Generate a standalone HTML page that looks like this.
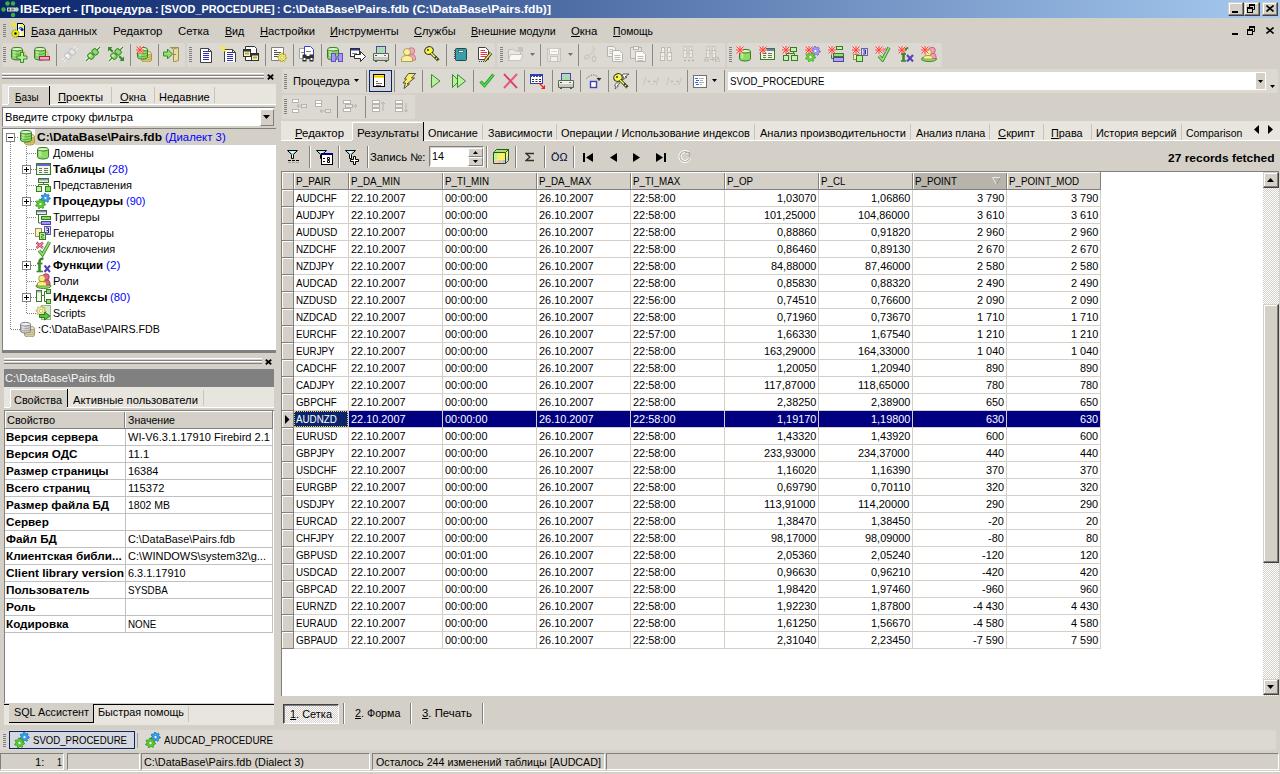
<!DOCTYPE html>
<html><head><meta charset="utf-8"><style>
html,body{margin:0;padding:0;}
body{width:1280px;height:774px;overflow:hidden;position:relative;background:#D4D0C8;font-family:"Liberation Sans",sans-serif;font-size:11px;}
body>div,body>span,body>svg{position:absolute;}
.t{white-space:pre;line-height:13px;transform-origin:0 0;display:block;}
u{text-decoration:underline;text-underline-offset:1px;}

</style></head><body>
<div style="left:0px;top:0px;width:1280px;height:18px;background:linear-gradient(to right,#0A246A,#A6CAF0)"></div>
<svg style="left:1px;top:1px" width="19" height="17" viewBox="0 0 19 17"><circle cx="6.5" cy="2.5" r="2.2" fill="#3CB040"/><circle cx="12" cy="2.5" r="2.2" fill="#3CB040"/><circle cx="2.5" cy="8.5" r="2.2" fill="#3CB040"/><circle cx="15.5" cy="8.5" r="2.2" fill="#B0D8A8"/><circle cx="12" cy="14" r="2.2" fill="#3CB040"/><rect x="6" y="6.5" width="8" height="4" fill="#D8D8D8"/><rect x="7" y="7.5" width="2" height="2" fill="#505050"/><rect x="10" y="7.5" width="3" height="2" fill="#808080"/></svg>
<span class="t" style="left:19.50px;top:3px;color:#fff;transform:scaleX(1.1104);font-weight:bold;">IBExpert - [Процедура</span>
<span class="t" style="left:155.00px;top:3px;color:#fff;transform:scaleX(0.9573);font-weight:bold;">:</span>
<span class="t" style="left:160.90px;top:3px;color:#fff;transform:scaleX(0.9878);font-weight:bold;">[SVOD_PROCEDURE]</span>
<span class="t" style="left:277.00px;top:3px;color:#fff;transform:scaleX(0.9573);font-weight:bold;">:</span>
<span class="t" style="left:282.80px;top:3px;color:#fff;transform:scaleX(1.0985);font-weight:bold;">C:\DataBase\Pairs.fdb (C:\DataBase\Pairs.fdb)]</span>
<div style="left:1228px;top:2px;width:16px;height:14px;background:#D4D0C8;border-top:1px solid #D4D0C8;border-left:1px solid #D4D0C8;border-right:1px solid #404040;border-bottom:1px solid #404040;box-sizing:border-box"></div>
<div style="left:1229px;top:3px;width:14px;height:1px;background:#fff"></div>
<div style="left:1229px;top:3px;width:1px;height:12px;background:#fff"></div>
<div style="left:1229px;top:14px;width:14px;height:1px;background:#808080"></div>
<div style="left:1242px;top:3px;width:1px;height:12px;background:#808080"></div>
<svg style="left:1232px;top:11px" width="6" height="2" viewBox="0 0 6 2"><rect width="6" height="2" fill="#000"/></svg>
<div style="left:1244px;top:2px;width:16px;height:14px;background:#D4D0C8;border-top:1px solid #D4D0C8;border-left:1px solid #D4D0C8;border-right:1px solid #404040;border-bottom:1px solid #404040;box-sizing:border-box"></div>
<div style="left:1245px;top:3px;width:14px;height:1px;background:#fff"></div>
<div style="left:1245px;top:3px;width:1px;height:12px;background:#fff"></div>
<div style="left:1245px;top:14px;width:14px;height:1px;background:#808080"></div>
<div style="left:1258px;top:3px;width:1px;height:12px;background:#808080"></div>
<svg style="left:1247px;top:4px" width="10" height="9" viewBox="0 0 10 9"><rect x="2" y="0" width="6" height="2" fill="#000"/><path d="M2.5 0.5V3M7.5 0.5V5.5H6" stroke="#000" fill="none"/><rect x="0" y="3" width="6" height="2" fill="#000"/><rect x="0.5" y="3.5" width="5" height="5" fill="none" stroke="#000"/></svg>
<div style="left:1262px;top:2px;width:16px;height:14px;background:#D4D0C8;border-top:1px solid #D4D0C8;border-left:1px solid #D4D0C8;border-right:1px solid #404040;border-bottom:1px solid #404040;box-sizing:border-box"></div>
<div style="left:1263px;top:3px;width:14px;height:1px;background:#fff"></div>
<div style="left:1263px;top:3px;width:1px;height:12px;background:#fff"></div>
<div style="left:1263px;top:14px;width:14px;height:1px;background:#808080"></div>
<div style="left:1276px;top:3px;width:1px;height:12px;background:#808080"></div>
<svg style="left:1266px;top:5px" width="8" height="7" viewBox="0 0 8 7"><path d="M0.5 0.5L7.5 6.5M7.5 0.5L0.5 6.5" stroke="#000" stroke-width="1.6"/></svg>
<svg style="left:3px;top:24px" width="3" height="13" viewBox="0 0 3 13"><rect x="0" y="0" width="3" height="1" fill="#808080"/><rect x="0" y="2" width="3" height="1" fill="#808080"/><rect x="0" y="4" width="3" height="1" fill="#808080"/><rect x="0" y="6" width="3" height="1" fill="#808080"/><rect x="0" y="8" width="3" height="1" fill="#808080"/><rect x="0" y="10" width="3" height="1" fill="#808080"/><rect x="0" y="12" width="3" height="1" fill="#808080"/></svg>
<svg style="left:10px;top:22px" width="16" height="16" viewBox="0 0 16 16"><path d="M7.5 1.5H12.5L14.5 3.5V14.5H7.5Z" fill="#fff" stroke="#000"/><path d="M10 1.5H12.5L14.5 3.5V14.5H12" fill="#F8F080"/><path d="M7.5 1.5H12.5L14.5 3.5V14.5H7.5Z" fill="none" stroke="#000"/><path d="M9 7Q10 4.5 12 6" stroke="#20A080" stroke-width="1.6" fill="none"/><circle cx="12" cy="7.5" r="1.6" fill="#1010E0"/><circle cx="5.5" cy="11.5" r="3.6" fill="#F0F000" stroke="#606000" stroke-width=".8" stroke-dasharray="1.2 .8"/><circle cx="5.5" cy="11.5" r="1.2" fill="#000"/><path d="M1 0.5L5 5M0 4H4M4 0.5V3.5M6 1L4 4" stroke="#F0F000" stroke-width="1.1"/></svg>
<span class="t" style="left:31.00px;top:25px;color:#000;transform:scaleX(1.0067);"><u>Б</u>аза данных</span>
<span class="t" style="left:112.50px;top:25px;color:#000;transform:scaleX(1.0445);">Редактор</span>
<span class="t" style="left:178.00px;top:25px;color:#000;transform:scaleX(1.0366);">Сетка</span>
<span class="t" style="left:224.60px;top:25px;color:#000;transform:scaleX(0.9695);"><u>В</u>ид</span>
<span class="t" style="left:259.50px;top:25px;color:#000;transform:scaleX(1.0197);"><u>Н</u>астройки</span>
<span class="t" style="left:329.60px;top:25px;color:#000;transform:scaleX(1.0015);"><u>И</u>нструменты</span>
<span class="t" style="left:413.80px;top:25px;color:#000;transform:scaleX(0.9983);"><u>С</u>лужбы</span>
<span class="t" style="left:470.70px;top:25px;color:#000;transform:scaleX(0.9682);"><u>В</u>нешние модули</span>
<span class="t" style="left:570.60px;top:25px;color:#000;transform:scaleX(1.0321);"><u>О</u>кна</span>
<span class="t" style="left:612.90px;top:25px;color:#000;transform:scaleX(0.9412);"><u>П</u>омощь</span>
<svg style="left:1232px;top:32px" width="6" height="3" viewBox="0 0 6 3"><rect width="6" height="2" y="1" fill="#000"/></svg>
<svg style="left:1247px;top:26px" width="10" height="9" viewBox="0 0 10 9"><rect x="2" y="0" width="6" height="2" fill="#000"/><path d="M2.5 0.5V3M7.5 0.5V5.5H6" stroke="#000" fill="none"/><rect x="0" y="3" width="6" height="2" fill="#000"/><rect x="0.5" y="3.5" width="5" height="5" fill="none" stroke="#000"/></svg>
<svg style="left:1266px;top:27px" width="8" height="7" viewBox="0 0 8 7"><path d="M0.5 0.5L7.5 6.5M7.5 0.5L0.5 6.5" stroke="#000" stroke-width="1.6"/></svg>
<div style="left:2px;top:43px;width:183px;height:24px;background:#DCD9D2;border-radius:2px"></div>
<svg style="left:3px;top:47px" width="3" height="15" viewBox="0 0 3 15"><rect x="0" y="0" width="3" height="1" fill="#808080"/><rect x="0" y="2" width="3" height="1" fill="#808080"/><rect x="0" y="4" width="3" height="1" fill="#808080"/><rect x="0" y="6" width="3" height="1" fill="#808080"/><rect x="0" y="8" width="3" height="1" fill="#808080"/><rect x="0" y="10" width="3" height="1" fill="#808080"/><rect x="0" y="12" width="3" height="1" fill="#808080"/><rect x="0" y="14" width="3" height="1" fill="#808080"/></svg>
<div style="left:187px;top:43px;width:308px;height:24px;background:#DCD9D2;border-radius:2px"></div>
<svg style="left:189px;top:47px" width="3" height="15" viewBox="0 0 3 15"><rect x="0" y="0" width="3" height="1" fill="#808080"/><rect x="0" y="2" width="3" height="1" fill="#808080"/><rect x="0" y="4" width="3" height="1" fill="#808080"/><rect x="0" y="6" width="3" height="1" fill="#808080"/><rect x="0" y="8" width="3" height="1" fill="#808080"/><rect x="0" y="10" width="3" height="1" fill="#808080"/><rect x="0" y="12" width="3" height="1" fill="#808080"/><rect x="0" y="14" width="3" height="1" fill="#808080"/></svg>
<div style="left:497px;top:43px;width:228px;height:24px;background:#DCD9D2;border-radius:2px"></div>
<svg style="left:500px;top:47px" width="3" height="15" viewBox="0 0 3 15"><rect x="0" y="0" width="3" height="1" fill="#808080"/><rect x="0" y="2" width="3" height="1" fill="#808080"/><rect x="0" y="4" width="3" height="1" fill="#808080"/><rect x="0" y="6" width="3" height="1" fill="#808080"/><rect x="0" y="8" width="3" height="1" fill="#808080"/><rect x="0" y="10" width="3" height="1" fill="#808080"/><rect x="0" y="12" width="3" height="1" fill="#808080"/><rect x="0" y="14" width="3" height="1" fill="#808080"/></svg>
<div style="left:727px;top:43px;width:215px;height:24px;background:#DCD9D2;border-radius:2px"></div>
<svg style="left:729px;top:47px" width="3" height="15" viewBox="0 0 3 15"><rect x="0" y="0" width="3" height="1" fill="#808080"/><rect x="0" y="2" width="3" height="1" fill="#808080"/><rect x="0" y="4" width="3" height="1" fill="#808080"/><rect x="0" y="6" width="3" height="1" fill="#808080"/><rect x="0" y="8" width="3" height="1" fill="#808080"/><rect x="0" y="10" width="3" height="1" fill="#808080"/><rect x="0" y="12" width="3" height="1" fill="#808080"/><rect x="0" y="14" width="3" height="1" fill="#808080"/></svg>
<div style="left:56px;top:44px;width:1px;height:22px;background:#8C8984"></div>
<div style="left:130px;top:44px;width:1px;height:22px;background:#8C8984"></div>
<div style="left:158px;top:44px;width:1px;height:22px;background:#8C8984"></div>
<div style="left:265px;top:44px;width:1px;height:22px;background:#8C8984"></div>
<div style="left:293px;top:44px;width:1px;height:22px;background:#8C8984"></div>
<div style="left:321px;top:44px;width:1px;height:22px;background:#8C8984"></div>
<div style="left:395px;top:44px;width:1px;height:22px;background:#8C8984"></div>
<div style="left:446px;top:44px;width:1px;height:22px;background:#8C8984"></div>
<div style="left:540px;top:44px;width:1px;height:22px;background:#8C8984"></div>
<div style="left:578px;top:44px;width:1px;height:22px;background:#8C8984"></div>
<div style="left:652px;top:44px;width:1px;height:22px;background:#8C8984"></div>
<svg style="left:10px;top:46px" width="18" height="17" viewBox="0 0 18 17"><path d="M9 5A5 2.2 0 0 1 15 7V12" stroke="#D8C070" fill="none" stroke-width="1.6"/><g transform="translate(1,1)"><path d="M0.5 2.2 V10.8 A5.5 2.2 0 0 0 11.5 10.8 V2.2" fill="#8CDC64" stroke="#3A7A28"/><path d="M0.5 5.1 A5.5 2.2 0 0 0 11.5 5.1" fill="none" stroke="#3A7A28" stroke-width=".7" opacity=".8"/><path d="M0.5 7.9 A5.5 2.2 0 0 0 11.5 7.9" fill="none" stroke="#3A7A28" stroke-width=".7" opacity=".8"/><ellipse cx="6.0" cy="2.2" rx="5.5" ry="1.8000000000000003" fill="#D8F8C0" stroke="#3A7A28"/><rect x="2" y="3.7" width="2.5" height="6.6" fill="#fff" opacity=".35"/></g><path d="M10.5 6.5H13.5V10H17V13H13.5V16.5H10.5V13H7V10H10.5Z" fill="#B8F098" stroke="#3A8A28"/></svg>
<svg style="left:33px;top:46px" width="18" height="17" viewBox="0 0 18 17"><path d="M9 5A5 2.2 0 0 1 15 7V12" stroke="#D8C070" fill="none" stroke-width="1.6"/><g transform="translate(1,1)"><path d="M0.5 2.2 V10.8 A5.5 2.2 0 0 0 11.5 10.8 V2.2" fill="#8CDC64" stroke="#3A7A28"/><path d="M0.5 5.1 A5.5 2.2 0 0 0 11.5 5.1" fill="none" stroke="#3A7A28" stroke-width=".7" opacity=".8"/><path d="M0.5 7.9 A5.5 2.2 0 0 0 11.5 7.9" fill="none" stroke="#3A7A28" stroke-width=".7" opacity=".8"/><ellipse cx="6.0" cy="2.2" rx="5.5" ry="1.8000000000000003" fill="#D8F8C0" stroke="#3A7A28"/><rect x="2" y="3.7" width="2.5" height="6.6" fill="#fff" opacity=".35"/></g><rect x="6.5" y="10.5" width="10" height="3.5" fill="#F8A8C0" stroke="#A02850"/></svg>
<svg style="left:62px;top:46px" width="16" height="16" viewBox="0 0 16 16"><path d="M1 15L15 1" stroke="#fff" stroke-width="3"/><path d="M1 15L15 1" stroke="#C0C0C0" stroke-width="1.2"/><g transform="rotate(-45 8 8)"><rect x="2.5" y="5" width="5" height="6" rx="1.5" fill="#E8E8E8" stroke="#C0C0C0"/><rect x="8.5" y="5" width="5" height="6" rx="1.5" fill="#E8E8E8" stroke="#C0C0C0"/><rect x="3.5" y="6" width="2.5" height="2" fill="#fff"/></g></svg>
<svg style="left:85px;top:46px" width="16" height="16" viewBox="0 0 16 16"><path d="M1 15L15 1" stroke="#fff" stroke-width="3"/><path d="M1 15L15 1" stroke="#3A8A28" stroke-width="1.2"/><g transform="rotate(-45 8 8)"><rect x="2.5" y="5" width="5" height="6" rx="1.5" fill="#90D870" stroke="#3A8A28"/><rect x="8.5" y="5" width="5" height="6" rx="1.5" fill="#90D870" stroke="#3A8A28"/><rect x="3.5" y="6" width="2.5" height="2" fill="#D0F4B8"/></g></svg>
<svg style="left:108px;top:46px" width="16" height="16" viewBox="0 0 16 16"><path d="M1 15L15 1" stroke="#fff" stroke-width="3"/><path d="M1 15L15 1" stroke="#3A8A28" stroke-width="1.2"/><g transform="rotate(-45 8 8)"><rect x="2.5" y="5" width="5" height="6" rx="1.5" fill="#90D870" stroke="#3A8A28"/><rect x="8.5" y="5" width="5" height="6" rx="1.5" fill="#90D870" stroke="#3A8A28"/><rect x="3.5" y="6" width="2.5" height="2" fill="#D0F4B8"/></g><path d="M0 1H4.5L3 2.5L5.5 5L4 6.5L1.5 4L0 5.5Z" fill="#3A8A28"/><path d="M16 15H11.5L13 13.5L10.5 11L12 9.5L14.5 12L16 10.5Z" fill="#3A8A28"/></svg>
<svg style="left:136px;top:46px" width="16" height="16" viewBox="0 0 16 16"><g transform="translate(5,5)"><path d="M0.5 2.2 V8.8 A5.0 2.2 0 0 0 10.5 8.8 V2.2" fill="#D8C868" stroke="#A89848"/><path d="M0.5 4.4 A5.0 2.2 0 0 0 10.5 4.4" fill="none" stroke="#A89848" stroke-width=".7" opacity=".8"/><path d="M0.5 6.6 A5.0 2.2 0 0 0 10.5 6.6" fill="none" stroke="#A89848" stroke-width=".7" opacity=".8"/><ellipse cx="5.5" cy="2.2" rx="5.0" ry="1.8000000000000003" fill="#F4ECA8" stroke="#A89848"/><rect x="2" y="3.7" width="2.5" height="4.6" fill="#fff" opacity=".35"/></g><g transform="translate(1,1)"><path d="M0.5 2.2 V9.8 A5.0 2.2 0 0 0 10.5 9.8 V2.2" fill="#8CDC64" stroke="#3A7A28"/><path d="M0.5 4.7 A5.0 2.2 0 0 0 10.5 4.7" fill="none" stroke="#3A7A28" stroke-width=".7" opacity=".8"/><path d="M0.5 7.3 A5.0 2.2 0 0 0 10.5 7.3" fill="none" stroke="#3A7A28" stroke-width=".7" opacity=".8"/><ellipse cx="5.5" cy="2.2" rx="5.0" ry="1.8000000000000003" fill="#D8F8C0" stroke="#3A7A28"/><rect x="2" y="3.7" width="2.5" height="5.6" fill="#fff" opacity=".35"/></g><g transform="translate(0,0)"><circle cx="4" cy="4" r="3" fill="#FFE45A"/><path d="M0.5 0.5L7.5 7.5M7.5 0.5L0.5 7.5M4 0V8M0 4H8" stroke="#FF3C78" stroke-width="1"/><rect x="3" y="3" width="2" height="2" fill="#FF3C78"/></g></svg>
<svg style="left:163px;top:46px" width="16" height="16" viewBox="0 0 16 16"><path d="M7.5 1.5H15.5V14.5L10.5 16V3Z" fill="#E8DCA0" stroke="#A09050"/><path d="M10.5 3L15.5 1.5" stroke="#A09050"/><rect x="11.5" y="8" width="1" height="1" fill="#604010"/><path d="M0.5 6H4.5V3L9.5 8L4.5 13V10H0.5Z" fill="#90E070" stroke="#3A8A28"/></svg>
<svg style="left:200px;top:48px" width="16" height="16" viewBox="0 0 16 16"><path d="M0.5 0.5H8.5L11.5 3.5V14.5H0.5Z" fill="#fff" stroke="#404040"/><path d="M8.5 0.5V3.5H11.5" fill="none" stroke="#404040"/><rect x="3" y="3" width="6" height="1" fill="#3030B0"/><rect x="3" y="5" width="6" height="1" fill="#3030B0"/><rect x="3" y="7" width="6" height="1" fill="#3030B0"/><rect x="3" y="9" width="6" height="1" fill="#3030B0"/><rect x="3" y="11" width="6" height="1" fill="#3030B0"/></svg>
<svg style="left:220px;top:46px" width="16" height="16" viewBox="0 0 16 16"><path d="M4.5 3.5H12.5L15.5 6.5V16.5H4.5Z" fill="#fff" stroke="#404040"/><path d="M12.5 3.5V6.5H15.5" fill="none" stroke="#404040"/><rect x="7" y="6" width="6" height="1" fill="#3030B0"/><rect x="7" y="8" width="6" height="1" fill="#3030B0"/><rect x="7" y="10" width="6" height="1" fill="#3030B0"/><rect x="7" y="12" width="6" height="1" fill="#3030B0"/><rect x="7" y="14" width="6" height="1" fill="#3030B0"/><path d="M0.5 0.5L6 6M3 0V3M0 3H3M6 1L4 3" stroke="#F8F030" stroke-width="1.1"/></svg>
<svg style="left:243px;top:46px" width="16" height="16" viewBox="0 0 16 16"><path d="M2.5 0.5H11.5L13.5 2.5V14.5H2.5Z" fill="#fff" stroke="#303030"/><rect x="0.5" y="3.5" width="7" height="7" fill="#FFF8A0" stroke="#303030"/><rect x="1" y="4" width="6" height="1.5" fill="#303030"/><rect x="2" y="6.5" width="4" height="2" fill="#A0A0A0"/><rect x="8.5" y="7.5" width="7" height="7" fill="#FFF8A0" stroke="#303030"/><rect x="9" y="8" width="6" height="1.5" fill="#303030"/><rect x="10" y="10.5" width="4" height="2" fill="#A0A0A0"/></svg>
<svg style="left:271px;top:46px" width="16" height="16" viewBox="0 0 16 16"><path d="M0.5 1.5H12.5V14.5H0.5Z" fill="#fff" stroke="#808080"/><path d="M3 4.5H6M3 6.5H10M3 8.5H10M3 10.5H8" stroke="#505050"/><polygon points="15.60,11.50 15.51,12.40 13.97,12.73 13.68,13.29 14.25,14.75 13.56,15.32 12.23,14.47 11.63,14.66 11.00,16.10 10.10,16.01 9.77,14.47 9.21,14.18 7.75,14.75 7.18,14.06 8.03,12.73 7.84,12.13 6.40,11.50 6.49,10.60 8.03,10.27 8.32,9.71 7.75,8.25 8.44,7.68 9.77,8.53 10.37,8.34 11.00,6.90 11.90,6.99 12.23,8.53 12.79,8.82 14.25,8.25 14.82,8.94 13.97,10.27 14.16,10.87" fill="#F8F060" stroke="#A09020" stroke-width=".7"/><circle cx="11" cy="11.5" r="1.47" fill="#fff" stroke="#A09020" stroke-width=".5"/></svg>
<svg style="left:299px;top:46px" width="16" height="16" viewBox="0 0 16 16"><path d="M0.5 2.5H6.5L8.5 4.5V12.5H0.5Z" fill="#fff" stroke="#A0A0A0"/><path d="M5.5 0.5H11.5L14.5 3.5V12.5H5.5Z" fill="#fff" stroke="#4040C0"/><path d="M2 6.5H5M7 5.5H12" stroke="#808080"/><rect x="3.5" y="8.5" width="4" height="7" fill="#303030"/><rect x="10.5" y="8.5" width="4" height="7" fill="#303030"/><rect x="7" y="10" width="4" height="3" fill="#303030"/><rect x="4.5" y="12" width="2" height="2" fill="#fff"/><rect x="11.5" y="12" width="2" height="2" fill="#fff"/></svg>
<svg style="left:326px;top:46px" width="18" height="17" viewBox="0 0 18 17"><g transform="translate(1,1)"><path d="M0.5 2.2 V10.8 A5.5 2.2 0 0 0 11.5 10.8 V2.2" fill="#8CDC64" stroke="#3A7A28"/><path d="M0.5 5.1 A5.5 2.2 0 0 0 11.5 5.1" fill="none" stroke="#3A7A28" stroke-width=".7" opacity=".8"/><path d="M0.5 7.9 A5.5 2.2 0 0 0 11.5 7.9" fill="none" stroke="#3A7A28" stroke-width=".7" opacity=".8"/><ellipse cx="6.0" cy="2.2" rx="5.5" ry="1.8000000000000003" fill="#D8F8C0" stroke="#3A7A28"/><rect x="2" y="3.7" width="2.5" height="6.6" fill="#fff" opacity=".35"/></g><rect x="5.5" y="7.5" width="4" height="8" fill="#A898F0" stroke="#6050C0"/><rect x="12.5" y="7.5" width="4" height="8" fill="#A898F0" stroke="#6050C0"/><rect x="9" y="10" width="4" height="3" fill="#8070D8"/></svg>
<svg style="left:350px;top:46px" width="16" height="16" viewBox="0 0 16 16"><rect x="0.5" y="2.5" width="9" height="8" fill="#fff" stroke="#303030"/><rect x="1" y="3" width="8" height="1.5" fill="#3030A0"/><path d="M2 7.5H7" stroke="#808080"/><path d="M4.5 8.5H10.5V5.5L15.5 10.5L10.5 15.5V12.5H4.5Z" fill="#fff" stroke="#303030"/></svg>
<svg style="left:373px;top:46px" width="16" height="16" viewBox="0 0 16 16"><rect x="3.5" y="0.5" width="9" height="8" fill="#B8E8B0" stroke="#5040A8"/><rect x="4.5" y="1.5" width="7" height="6" fill="#A8D8B8"/><path d="M0.5 7.5H15.5V14.5H0.5Z" fill="#F0F0F0" stroke="#507040"/><rect x="1" y="11" width="14" height="3" fill="#C8C8C8"/><rect x="2" y="9" width="2" height="1" fill="#404040"/><rect x="11" y="9" width="2" height="1" fill="#F03060"/><rect x="2" y="15" width="2" height="1" fill="#505050"/><rect x="12" y="15" width="2" height="1" fill="#505050"/></svg>
<svg style="left:401px;top:46px" width="16" height="16" viewBox="0 0 16 16"><circle cx="10.5" cy="5" r="3.3" fill="#F0A8B8" stroke="#C07080" stroke-width=".8"/><path d="M7 15V11.5Q7 8.5 10.5 8.5Q14.5 8.5 14.5 11.5V14Z" fill="#F0A8B8" stroke="#C07080" stroke-width=".8"/><circle cx="6" cy="6" r="3.5" fill="#F8F0A0" stroke="#A09040" stroke-width=".8"/><path d="M0.5 15.5V13Q1 9.5 6 9.5Q11 9.5 11.5 13V15.5Z" fill="#F8F0A0" stroke="#A09040" stroke-width=".8"/></svg>
<svg style="left:424px;top:46px" width="16" height="16" viewBox="0 0 16 16"><ellipse cx="5" cy="4.5" rx="4.3" ry="3.8" fill="#F8F840" stroke="#303030" transform="rotate(-20 5 4.5)"/><circle cx="4" cy="4" r="1" fill="#303030"/><path d="M7 7L14.5 14.5" stroke="#303030" stroke-width="3"/><path d="M7 7L14.5 14.5" stroke="#F8F840" stroke-width="1.4"/><path d="M11 12L12.5 10.5M13 14L14.5 12.5" stroke="#303030" stroke-width="1.6"/></svg>
<svg style="left:453px;top:46px" width="16" height="16" viewBox="0 0 16 16"><rect x="2.5" y="2.5" width="11" height="12" rx="1" fill="#38A0A8" stroke="#204848"/><rect x="5.5" y="4.5" width="5" height="2" fill="#fff" stroke="#204848" stroke-width=".6"/><path d="M1 4.5H3M1 6.5H3M1 8.5H3M1 10.5H3M1 12.5H3" stroke="#505050"/></svg>
<svg style="left:477px;top:46px" width="16" height="16" viewBox="0 0 16 16"><path d="M1.5 1.5H8.5L11.5 4.5V13.5H1.5Z" fill="#fff" stroke="#404040"/><path d="M3.5 4.5H8M3.5 6.5H10M3.5 8.5H10M3.5 10.5H9" stroke="#F03040"/><path d="M7.5 15L14 7" stroke="#303030" stroke-width="3"/><path d="M7.8 14.6L13.8 7.2" stroke="#F8F040" stroke-width="1.4"/><path d="M2 15.5H3M4 15.5H5M6 15.5H7" stroke="#404040"/></svg>
<svg style="left:508px;top:46px" width="16" height="16" viewBox="0 0 16 16"><path d="M0.5 3.5H5.5L7 5H12.5V14.5H0.5Z" fill="#E8E6E0" stroke="#C0BCB4"/><path d="M2.5 8.5H15L12.5 14.5H0.5Z" fill="#F8F8F6" stroke="#C8C4BC"/><rect x="10" y="1" width="5" height="5" fill="#C8C4BC"/></svg>
<svg style="left:530px;top:53px" width="5" height="3" viewBox="0 0 5 3"><path d="M0 0H5L2.5 3Z" fill="#707070"/></svg>
<svg style="left:547px;top:48px" width="16" height="16" viewBox="0 0 16 16"><rect x="0.5" y="0.5" width="13" height="13" fill="#E0DED8" stroke="#C8C4BC"/><rect x="2.5" y="0.5" width="9" height="6" fill="#FAFAFA" stroke="#D0CCC4"/><path d="M4 3.5H10" stroke="#D8D4CC"/><rect x="3.5" y="8.5" width="7" height="5" fill="#F0F0EE" stroke="#C8C4BC"/></svg>
<svg style="left:568px;top:53px" width="5" height="3" viewBox="0 0 5 3"><path d="M0 0H5L2.5 3Z" fill="#707070"/></svg>
<svg style="left:584px;top:46px" width="16" height="16" viewBox="0 0 16 16"><ellipse cx="3" cy="11" rx="2.6" ry="1.8" fill="none" stroke="#C8C4BC" stroke-width="1.2" transform="rotate(-30 3 11)"/><ellipse cx="10" cy="13" rx="1.8" ry="2.6" fill="none" stroke="#C8C4BC" stroke-width="1.2"/><path d="M5 10L12 2M10 10.5L9 0" stroke="#D0CCC4" stroke-width="1.3"/></svg>
<svg style="left:607px;top:46px" width="16" height="16" viewBox="0 0 16 16"><path d="M0.5 0.5H6.5L8.5 2.5V10.5H0.5Z" fill="#F4F2EE" stroke="#B8B4AC"/><path d="M2 3.5H6M2 5.5H7M2 7.5H7" stroke="#C8C4BC"/><path d="M5.5 4.5H12.5L15.5 7.5V15.5H5.5Z" fill="#FAFAFA" stroke="#B8B4AC"/><path d="M7.5 9.5H13.5M7.5 11.5H13.5M7.5 13.5H13.5" stroke="#C0BCB4"/></svg>
<svg style="left:630px;top:46px" width="16" height="16" viewBox="0 0 16 16"><rect x="0.5" y="1.5" width="11" height="11" fill="#E4E2DC" stroke="#B8B4AC"/><rect x="3.5" y="0.5" width="5" height="3" fill="#F4F2EE" stroke="#B8B4AC"/><path d="M5.5 5.5H12.5L15.5 8.5V15.5H5.5Z" fill="#FAFAFA" stroke="#B8B4AC"/><path d="M7.5 10.5H13.5M7.5 12.5H13.5M7.5 14.5H13.5" stroke="#C0BCB4"/></svg>
<svg style="left:659px;top:46px" width="16" height="16" viewBox="0 0 16 16"><rect x="1.5" y="6.5" width="4" height="8" fill="#F0EEE8" stroke="#C0BCB4"/><rect x="8.5" y="6.5" width="4" height="8" fill="#F0EEE8" stroke="#C0BCB4"/><rect x="2.5" y="1.5" width="3" height="5" fill="#F0EEE8" stroke="#C0BCB4"/><rect x="8.5" y="1.5" width="3" height="5" fill="#F0EEE8" stroke="#C0BCB4"/><rect x="5" y="8" width="4" height="3" fill="#D0CCC4"/><path d="M2.5 10.5H4.5M9.5 10.5H11.5" stroke="#C8C4BC"/></svg>
<svg style="left:681px;top:46px" width="16" height="16" viewBox="0 0 16 16"><g transform="translate(1,-1) scale(.85)"><rect x="1.5" y="6.5" width="4" height="8" fill="#F0EEE8" stroke="#C0BCB4"/><rect x="8.5" y="6.5" width="4" height="8" fill="#F0EEE8" stroke="#C0BCB4"/><rect x="2.5" y="1.5" width="3" height="5" fill="#F0EEE8" stroke="#C0BCB4"/><rect x="8.5" y="1.5" width="3" height="5" fill="#F0EEE8" stroke="#C0BCB4"/><rect x="5" y="8" width="4" height="3" fill="#D0CCC4"/><path d="M2.5 10.5H4.5M9.5 10.5H11.5" stroke="#C8C4BC"/></g><path d="M3 14.5H5M7 14.5H9M11 14.5H13" stroke="#B8B4AC" stroke-width="1.4"/></svg>
<svg style="left:704px;top:46px" width="16" height="16" viewBox="0 0 16 16"><g transform="translate(1,-1) scale(.85)"><rect x="1.5" y="6.5" width="4" height="8" fill="#F0EEE8" stroke="#C0BCB4"/><rect x="8.5" y="6.5" width="4" height="8" fill="#F0EEE8" stroke="#C0BCB4"/><rect x="2.5" y="1.5" width="3" height="5" fill="#F0EEE8" stroke="#C0BCB4"/><rect x="8.5" y="1.5" width="3" height="5" fill="#F0EEE8" stroke="#C0BCB4"/><rect x="5" y="8" width="4" height="3" fill="#D0CCC4"/><path d="M2.5 10.5H4.5M9.5 10.5H11.5" stroke="#C8C4BC"/></g><path d="M1 16V12.5L2.5 11L4 12.5V16M1 14H4M6 13.5H10M8.5 12L10 13.5L8.5 15M11.5 11H14L15 12L14 13H11.5M11.5 16H14.5L15.5 15V14L14.5 13M11.5 11V16" stroke="#C0BCB4" fill="none"/></svg>
<svg style="left:736px;top:46px" width="16" height="16" viewBox="0 0 16 16"><g transform="translate(3,3)"><path d="M0.5 2.2 V9.8 A5.5 2.2 0 0 0 11.5 9.8 V2.2" fill="#8CDC64" stroke="#3A7A28"/><ellipse cx="6.0" cy="2.2" rx="5.5" ry="1.8000000000000003" fill="#D8F8C0" stroke="#3A7A28"/><rect x="2" y="3.7" width="2.5" height="5.6" fill="#fff" opacity=".35"/></g><g transform="translate(0,0)"><circle cx="4" cy="4" r="3" fill="#FFE45A"/><path d="M0.5 0.5L7.5 7.5M7.5 0.5L0.5 7.5M4 0V8M0 4H8" stroke="#FF3C78" stroke-width="1"/><rect x="3" y="3" width="2" height="2" fill="#FF3C78"/></g></svg>
<svg style="left:759px;top:46px" width="16" height="16" viewBox="0 0 16 16"><rect x="1.5" y="2.5" width="14" height="11" fill="#E8F8D8" stroke="#3A7A28"/><rect x="8" y="3" width="7" height="2" fill="#8070D0"/><path d="M4 7.5H7M9 7.5H13M4 9.5H7M9 9.5H13M4 11.5H7M9 11.5H13" stroke="#707070"/><g transform="translate(0,0)"><circle cx="4" cy="4" r="3" fill="#FFE45A"/><path d="M0.5 0.5L7.5 7.5M7.5 0.5L0.5 7.5M4 0V8M0 4H8" stroke="#FF3C78" stroke-width="1"/><rect x="3" y="3" width="2" height="2" fill="#FF3C78"/></g></svg>
<svg style="left:782px;top:46px" width="16" height="16" viewBox="0 0 16 16"><rect x="8.5" y="1.5" width="6" height="4" fill="#C8F0A8" stroke="#3A7A28"/><path d="M11.5 5.5V7.5H4.5V9.5M11.5 7.5H12.5V9.5" stroke="#3A7A28" fill="none"/><rect x="1.5" y="9.5" width="5" height="5" fill="#C8F0A8" stroke="#3A7A28"/><rect x="9.5" y="9.5" width="6" height="5" fill="#C8F0A8" stroke="#3A7A28"/><g transform="translate(0,0)"><circle cx="4" cy="4" r="3" fill="#FFE45A"/><path d="M0.5 0.5L7.5 7.5M7.5 0.5L0.5 7.5M4 0V8M0 4H8" stroke="#FF3C78" stroke-width="1"/><rect x="3" y="3" width="2" height="2" fill="#FF3C78"/></g></svg>
<svg style="left:805px;top:46px" width="16" height="16" viewBox="0 0 16 16"><g transform="translate(0,0)"><polygon points="15.30,5.00 15.18,6.07 13.53,6.46 13.13,7.09 13.49,8.75 12.58,9.32 11.25,8.28 10.50,8.36 9.43,9.68 8.42,9.32 8.41,7.63 7.87,7.09 6.18,7.08 5.82,6.07 7.14,5.00 7.22,4.25 6.18,2.92 6.75,2.01 8.41,2.37 9.04,1.97 9.43,0.32 10.50,0.20 11.25,1.72 11.96,1.97 13.49,1.25 14.25,2.01 13.53,3.54 13.78,4.25" fill="#A8A0F8" stroke="#6050C0" stroke-width=".7"/><circle cx="10.5" cy="5" r="1.54" fill="#fff" stroke="#6050C0" stroke-width=".5"/><polygon points="10.50,11.00 10.37,12.11 8.65,12.52 8.24,13.18 8.62,14.91 7.67,15.50 6.28,14.41 5.50,14.50 4.39,15.87 3.33,15.50 3.32,13.74 2.76,13.18 1.00,13.17 0.63,12.11 2.00,11.00 2.09,10.22 1.00,8.83 1.59,7.88 3.32,8.26 3.98,7.85 4.39,6.13 5.50,6.00 6.28,7.59 7.02,7.85 8.62,7.09 9.41,7.88 8.65,9.48 8.91,10.22" fill="#68D838" stroke="#3A9A28" stroke-width=".7"/><circle cx="5.5" cy="11" r="1.60" fill="#fff" stroke="#3A9A28" stroke-width=".5"/></g><g transform="translate(0,0)"><circle cx="4" cy="4" r="3" fill="#FFE45A"/><path d="M0.5 0.5L7.5 7.5M7.5 0.5L0.5 7.5M4 0V8M0 4H8" stroke="#FF3C78" stroke-width="1"/><rect x="3" y="3" width="2" height="2" fill="#FF3C78"/></g></svg>
<svg style="left:828px;top:46px" width="16" height="16" viewBox="0 0 16 16"><rect x="8.5" y="0.5" width="6" height="3" fill="#C8F0A8" stroke="#3A7A28"/><path d="M3.5 8.5V12.5H6" stroke="#3A7A28" fill="none"/><rect x="5.5" y="7.5" width="10" height="3" fill="#90E070" stroke="#3A7A28"/><rect x="5.5" y="11.5" width="10" height="4" fill="#B0A8F0" stroke="#5040A0"/><g transform="translate(0,0)"><circle cx="4" cy="4" r="3" fill="#FFE45A"/><path d="M0.5 0.5L7.5 7.5M7.5 0.5L0.5 7.5M4 0V8M0 4H8" stroke="#FF3C78" stroke-width="1"/><rect x="3" y="3" width="2" height="2" fill="#FF3C78"/></g></svg>
<svg style="left:852px;top:46px" width="16" height="16" viewBox="0 0 16 16"><rect x="9.5" y="2.5" width="6" height="7" fill="#E0DCFF" stroke="#7060B0"/><path d="M11 4H13.5V6H11.5M13.5 6V8H11" stroke="#303080" fill="none"/><rect x="1.5" y="8.5" width="5" height="5" fill="#F8F0C0" stroke="#A09050"/><rect x="4.5" y="9.5" width="6" height="6" fill="#B8F098" stroke="#3A7A28"/><g transform="translate(0,0)"><circle cx="4" cy="4" r="3" fill="#FFE45A"/><path d="M0.5 0.5L7.5 7.5M7.5 0.5L0.5 7.5M4 0V8M0 4H8" stroke="#FF3C78" stroke-width="1"/><rect x="3" y="3" width="2" height="2" fill="#FF3C78"/></g></svg>
<svg style="left:875px;top:46px" width="16" height="16" viewBox="0 0 16 16"><path d="M4 10L7.5 14L14 1.5" stroke="#3A8A28" stroke-width="3.4" fill="none"/><path d="M4 10L7.5 14L14 1.5" stroke="#98E878" stroke-width="1.6" fill="none"/><path d="M8 2L11 6M11 2L8 6" stroke="#F080A0" stroke-width="1.3"/><g transform="translate(0,0)"><circle cx="4" cy="4" r="3" fill="#FFE45A"/><path d="M0.5 0.5L7.5 7.5M7.5 0.5L0.5 7.5M4 0V8M0 4H8" stroke="#FF3C78" stroke-width="1"/><rect x="3" y="3" width="2" height="2" fill="#FF3C78"/></g></svg>
<svg style="left:898px;top:46px" width="16" height="16" viewBox="0 0 16 16"><path d="M5.5 15V7Q5.5 3 9 3" stroke="#3A8A28" stroke-width="2.6" fill="none"/><path d="M3 8H8" stroke="#3A8A28" stroke-width="1.8"/><path d="M3 15H8" stroke="#3A8A28" stroke-width="1.6"/><path d="M9 9L15 15.5M15 9L9 15.5" stroke="#5040C0" stroke-width="2"/><circle cx="9.5" cy="2" r="1" fill="#3A8A28"/><g transform="translate(0,0)"><circle cx="4" cy="4" r="3" fill="#FFE45A"/><path d="M0.5 0.5L7.5 7.5M7.5 0.5L0.5 7.5M4 0V8M0 4H8" stroke="#FF3C78" stroke-width="1"/><rect x="3" y="3" width="2" height="2" fill="#FF3C78"/></g></svg>
<svg style="left:921px;top:46px" width="16" height="16" viewBox="0 0 16 16"><ellipse cx="8" cy="13" rx="7.5" ry="2.5" fill="#90D870" stroke="#3A8A28"/><circle cx="11" cy="4.5" r="3.3" fill="#F4A0B8" stroke="#C05070" stroke-width=".8"/><path d="M8 12.5V10Q8 7.5 11.5 7.5Q15 7.5 15 10V12.5Z" fill="#F4A0B8" stroke="#C05070" stroke-width=".8"/><circle cx="7" cy="6.5" r="3.3" fill="#F8F0A0" stroke="#A09040" stroke-width=".8"/><path d="M2.5 13V11Q2.5 9.5 7 9.5Q11.5 9.5 11.5 11V13Z" fill="#F8F0A0" stroke="#A09040" stroke-width=".8"/><g transform="translate(0,0)"><circle cx="4" cy="4" r="3" fill="#FFE45A"/><path d="M0.5 0.5L7.5 7.5M7.5 0.5L0.5 7.5M4 0V8M0 4H8" stroke="#FF3C78" stroke-width="1"/><rect x="3" y="3" width="2" height="2" fill="#FF3C78"/></g></svg>
<div style="left:2px;top:73px;width:262px;height:1px;background:#fff"></div>
<div style="left:2px;top:75px;width:262px;height:1px;background:#808080"></div>
<div style="left:2px;top:76px;width:262px;height:1px;background:#fff"></div>
<div style="left:2px;top:78px;width:262px;height:1px;background:#808080"></div>
<svg style="left:267px;top:74px" width="7" height="6" viewBox="0 0 7 6"><path d="M0.8 0.8L6.2 5.2M6.2 0.8L0.8 5.2" stroke="#000" stroke-width="1.8"/></svg>
<div style="left:2px;top:84px;width:274px;height:21px;background:#E8E5DE"></div>
<div style="left:2px;top:104px;width:274px;height:1px;background:#fff"></div>
<div style="left:8px;top:87px;width:41px;height:18px;background:#D4D0C8"></div>
<div style="left:49px;top:86px;width:1px;height:19px;background:#000"></div>
<div style="left:8px;top:87px;width:1px;height:17px;background:#fff"></div>
<div style="left:8px;top:86px;width:41px;height:1px;background:#fff"></div>
<span class="t" style="left:15.00px;top:91px;color:#000;transform:scaleX(0.9017);"><u>Б</u>азы</span>
<span class="t" style="left:58.00px;top:91px;color:#000;transform:scaleX(1.0191);"><u>П</u>роекты</span>
<div style="left:111px;top:87px;width:1px;height:16px;background:#C8C4BC"></div>
<span class="t" style="left:120.00px;top:91px;color:#000;transform:scaleX(1.0165);"><u>О</u>кна</span>
<div style="left:154px;top:87px;width:1px;height:16px;background:#C8C4BC"></div>
<span class="t" style="left:159.30px;top:91px;color:#000;transform:scaleX(1.0027);">Недавние</span>
<div style="left:214px;top:87px;width:1px;height:16px;background:#C8C4BC"></div>
<div style="left:2px;top:107px;width:273px;height:20px;background:#fff;border-top:1px solid #808080;border-left:1px solid #808080;border-bottom:1px solid #D4D0C8;border-right:1px solid #D4D0C8;box-sizing:border-box"></div>
<span class="t" style="left:5.00px;top:111px;color:#000;transform:scaleX(1.0187);">Введите строку фильтра</span>
<div style="left:260px;top:109px;width:14px;height:17px;background:#D4D0C8;border-top:1px solid #fff;border-left:1px solid #fff;border-bottom:1px solid #808080;border-right:1px solid #808080;box-sizing:border-box"></div>
<svg style="left:263px;top:115px" width="7" height="4" viewBox="0 0 7 4"><path d="M0 0H7L3.5 4Z" fill="#000"/></svg>
<div style="left:2px;top:128px;width:274px;height:222px;background:#fff"></div>
<div style="left:2px;top:128px;width:274px;height:1px;background:#808080"></div>
<div style="left:2px;top:128px;width:1px;height:222px;background:#808080"></div>
<div style="left:2px;top:350px;width:274px;height:3px;background:#808080"></div>
<div style="left:35px;top:129px;width:241px;height:16px;background:#D4D0C8"></div>
<svg style="left:10px;top:142px" width="1" height="188" viewBox="0 0 1 188"><rect x="0" y="0" width="1" height="1" fill="#808080"/><rect x="0" y="2" width="1" height="1" fill="#808080"/><rect x="0" y="4" width="1" height="1" fill="#808080"/><rect x="0" y="6" width="1" height="1" fill="#808080"/><rect x="0" y="8" width="1" height="1" fill="#808080"/><rect x="0" y="10" width="1" height="1" fill="#808080"/><rect x="0" y="12" width="1" height="1" fill="#808080"/><rect x="0" y="14" width="1" height="1" fill="#808080"/><rect x="0" y="16" width="1" height="1" fill="#808080"/><rect x="0" y="18" width="1" height="1" fill="#808080"/><rect x="0" y="20" width="1" height="1" fill="#808080"/><rect x="0" y="22" width="1" height="1" fill="#808080"/><rect x="0" y="24" width="1" height="1" fill="#808080"/><rect x="0" y="26" width="1" height="1" fill="#808080"/><rect x="0" y="28" width="1" height="1" fill="#808080"/><rect x="0" y="30" width="1" height="1" fill="#808080"/><rect x="0" y="32" width="1" height="1" fill="#808080"/><rect x="0" y="34" width="1" height="1" fill="#808080"/><rect x="0" y="36" width="1" height="1" fill="#808080"/><rect x="0" y="38" width="1" height="1" fill="#808080"/><rect x="0" y="40" width="1" height="1" fill="#808080"/><rect x="0" y="42" width="1" height="1" fill="#808080"/><rect x="0" y="44" width="1" height="1" fill="#808080"/><rect x="0" y="46" width="1" height="1" fill="#808080"/><rect x="0" y="48" width="1" height="1" fill="#808080"/><rect x="0" y="50" width="1" height="1" fill="#808080"/><rect x="0" y="52" width="1" height="1" fill="#808080"/><rect x="0" y="54" width="1" height="1" fill="#808080"/><rect x="0" y="56" width="1" height="1" fill="#808080"/><rect x="0" y="58" width="1" height="1" fill="#808080"/><rect x="0" y="60" width="1" height="1" fill="#808080"/><rect x="0" y="62" width="1" height="1" fill="#808080"/><rect x="0" y="64" width="1" height="1" fill="#808080"/><rect x="0" y="66" width="1" height="1" fill="#808080"/><rect x="0" y="68" width="1" height="1" fill="#808080"/><rect x="0" y="70" width="1" height="1" fill="#808080"/><rect x="0" y="72" width="1" height="1" fill="#808080"/><rect x="0" y="74" width="1" height="1" fill="#808080"/><rect x="0" y="76" width="1" height="1" fill="#808080"/><rect x="0" y="78" width="1" height="1" fill="#808080"/><rect x="0" y="80" width="1" height="1" fill="#808080"/><rect x="0" y="82" width="1" height="1" fill="#808080"/><rect x="0" y="84" width="1" height="1" fill="#808080"/><rect x="0" y="86" width="1" height="1" fill="#808080"/><rect x="0" y="88" width="1" height="1" fill="#808080"/><rect x="0" y="90" width="1" height="1" fill="#808080"/><rect x="0" y="92" width="1" height="1" fill="#808080"/><rect x="0" y="94" width="1" height="1" fill="#808080"/><rect x="0" y="96" width="1" height="1" fill="#808080"/><rect x="0" y="98" width="1" height="1" fill="#808080"/><rect x="0" y="100" width="1" height="1" fill="#808080"/><rect x="0" y="102" width="1" height="1" fill="#808080"/><rect x="0" y="104" width="1" height="1" fill="#808080"/><rect x="0" y="106" width="1" height="1" fill="#808080"/><rect x="0" y="108" width="1" height="1" fill="#808080"/><rect x="0" y="110" width="1" height="1" fill="#808080"/><rect x="0" y="112" width="1" height="1" fill="#808080"/><rect x="0" y="114" width="1" height="1" fill="#808080"/><rect x="0" y="116" width="1" height="1" fill="#808080"/><rect x="0" y="118" width="1" height="1" fill="#808080"/><rect x="0" y="120" width="1" height="1" fill="#808080"/><rect x="0" y="122" width="1" height="1" fill="#808080"/><rect x="0" y="124" width="1" height="1" fill="#808080"/><rect x="0" y="126" width="1" height="1" fill="#808080"/><rect x="0" y="128" width="1" height="1" fill="#808080"/><rect x="0" y="130" width="1" height="1" fill="#808080"/><rect x="0" y="132" width="1" height="1" fill="#808080"/><rect x="0" y="134" width="1" height="1" fill="#808080"/><rect x="0" y="136" width="1" height="1" fill="#808080"/><rect x="0" y="138" width="1" height="1" fill="#808080"/><rect x="0" y="140" width="1" height="1" fill="#808080"/><rect x="0" y="142" width="1" height="1" fill="#808080"/><rect x="0" y="144" width="1" height="1" fill="#808080"/><rect x="0" y="146" width="1" height="1" fill="#808080"/><rect x="0" y="148" width="1" height="1" fill="#808080"/><rect x="0" y="150" width="1" height="1" fill="#808080"/><rect x="0" y="152" width="1" height="1" fill="#808080"/><rect x="0" y="154" width="1" height="1" fill="#808080"/><rect x="0" y="156" width="1" height="1" fill="#808080"/><rect x="0" y="158" width="1" height="1" fill="#808080"/><rect x="0" y="160" width="1" height="1" fill="#808080"/><rect x="0" y="162" width="1" height="1" fill="#808080"/><rect x="0" y="164" width="1" height="1" fill="#808080"/><rect x="0" y="166" width="1" height="1" fill="#808080"/><rect x="0" y="168" width="1" height="1" fill="#808080"/><rect x="0" y="170" width="1" height="1" fill="#808080"/><rect x="0" y="172" width="1" height="1" fill="#808080"/><rect x="0" y="174" width="1" height="1" fill="#808080"/><rect x="0" y="176" width="1" height="1" fill="#808080"/><rect x="0" y="178" width="1" height="1" fill="#808080"/><rect x="0" y="180" width="1" height="1" fill="#808080"/><rect x="0" y="182" width="1" height="1" fill="#808080"/><rect x="0" y="184" width="1" height="1" fill="#808080"/><rect x="0" y="186" width="1" height="1" fill="#808080"/></svg>
<svg style="left:26px;top:146px" width="1" height="168" viewBox="0 0 1 168"><rect x="0" y="0" width="1" height="1" fill="#808080"/><rect x="0" y="2" width="1" height="1" fill="#808080"/><rect x="0" y="4" width="1" height="1" fill="#808080"/><rect x="0" y="6" width="1" height="1" fill="#808080"/><rect x="0" y="8" width="1" height="1" fill="#808080"/><rect x="0" y="10" width="1" height="1" fill="#808080"/><rect x="0" y="12" width="1" height="1" fill="#808080"/><rect x="0" y="14" width="1" height="1" fill="#808080"/><rect x="0" y="16" width="1" height="1" fill="#808080"/><rect x="0" y="18" width="1" height="1" fill="#808080"/><rect x="0" y="20" width="1" height="1" fill="#808080"/><rect x="0" y="22" width="1" height="1" fill="#808080"/><rect x="0" y="24" width="1" height="1" fill="#808080"/><rect x="0" y="26" width="1" height="1" fill="#808080"/><rect x="0" y="28" width="1" height="1" fill="#808080"/><rect x="0" y="30" width="1" height="1" fill="#808080"/><rect x="0" y="32" width="1" height="1" fill="#808080"/><rect x="0" y="34" width="1" height="1" fill="#808080"/><rect x="0" y="36" width="1" height="1" fill="#808080"/><rect x="0" y="38" width="1" height="1" fill="#808080"/><rect x="0" y="40" width="1" height="1" fill="#808080"/><rect x="0" y="42" width="1" height="1" fill="#808080"/><rect x="0" y="44" width="1" height="1" fill="#808080"/><rect x="0" y="46" width="1" height="1" fill="#808080"/><rect x="0" y="48" width="1" height="1" fill="#808080"/><rect x="0" y="50" width="1" height="1" fill="#808080"/><rect x="0" y="52" width="1" height="1" fill="#808080"/><rect x="0" y="54" width="1" height="1" fill="#808080"/><rect x="0" y="56" width="1" height="1" fill="#808080"/><rect x="0" y="58" width="1" height="1" fill="#808080"/><rect x="0" y="60" width="1" height="1" fill="#808080"/><rect x="0" y="62" width="1" height="1" fill="#808080"/><rect x="0" y="64" width="1" height="1" fill="#808080"/><rect x="0" y="66" width="1" height="1" fill="#808080"/><rect x="0" y="68" width="1" height="1" fill="#808080"/><rect x="0" y="70" width="1" height="1" fill="#808080"/><rect x="0" y="72" width="1" height="1" fill="#808080"/><rect x="0" y="74" width="1" height="1" fill="#808080"/><rect x="0" y="76" width="1" height="1" fill="#808080"/><rect x="0" y="78" width="1" height="1" fill="#808080"/><rect x="0" y="80" width="1" height="1" fill="#808080"/><rect x="0" y="82" width="1" height="1" fill="#808080"/><rect x="0" y="84" width="1" height="1" fill="#808080"/><rect x="0" y="86" width="1" height="1" fill="#808080"/><rect x="0" y="88" width="1" height="1" fill="#808080"/><rect x="0" y="90" width="1" height="1" fill="#808080"/><rect x="0" y="92" width="1" height="1" fill="#808080"/><rect x="0" y="94" width="1" height="1" fill="#808080"/><rect x="0" y="96" width="1" height="1" fill="#808080"/><rect x="0" y="98" width="1" height="1" fill="#808080"/><rect x="0" y="100" width="1" height="1" fill="#808080"/><rect x="0" y="102" width="1" height="1" fill="#808080"/><rect x="0" y="104" width="1" height="1" fill="#808080"/><rect x="0" y="106" width="1" height="1" fill="#808080"/><rect x="0" y="108" width="1" height="1" fill="#808080"/><rect x="0" y="110" width="1" height="1" fill="#808080"/><rect x="0" y="112" width="1" height="1" fill="#808080"/><rect x="0" y="114" width="1" height="1" fill="#808080"/><rect x="0" y="116" width="1" height="1" fill="#808080"/><rect x="0" y="118" width="1" height="1" fill="#808080"/><rect x="0" y="120" width="1" height="1" fill="#808080"/><rect x="0" y="122" width="1" height="1" fill="#808080"/><rect x="0" y="124" width="1" height="1" fill="#808080"/><rect x="0" y="126" width="1" height="1" fill="#808080"/><rect x="0" y="128" width="1" height="1" fill="#808080"/><rect x="0" y="130" width="1" height="1" fill="#808080"/><rect x="0" y="132" width="1" height="1" fill="#808080"/><rect x="0" y="134" width="1" height="1" fill="#808080"/><rect x="0" y="136" width="1" height="1" fill="#808080"/><rect x="0" y="138" width="1" height="1" fill="#808080"/><rect x="0" y="140" width="1" height="1" fill="#808080"/><rect x="0" y="142" width="1" height="1" fill="#808080"/><rect x="0" y="144" width="1" height="1" fill="#808080"/><rect x="0" y="146" width="1" height="1" fill="#808080"/><rect x="0" y="148" width="1" height="1" fill="#808080"/><rect x="0" y="150" width="1" height="1" fill="#808080"/><rect x="0" y="152" width="1" height="1" fill="#808080"/><rect x="0" y="154" width="1" height="1" fill="#808080"/><rect x="0" y="156" width="1" height="1" fill="#808080"/><rect x="0" y="158" width="1" height="1" fill="#808080"/><rect x="0" y="160" width="1" height="1" fill="#808080"/><rect x="0" y="162" width="1" height="1" fill="#808080"/><rect x="0" y="164" width="1" height="1" fill="#808080"/><rect x="0" y="166" width="1" height="1" fill="#808080"/></svg>
<svg style="left:15px;top:137px" width="4" height="1" viewBox="0 0 4 1"><rect x="0" y="0" width="1" height="1" fill="#808080"/><rect x="2" y="0" width="1" height="1" fill="#808080"/></svg>
<svg style="left:6px;top:133px" width="9" height="9" viewBox="0 0 9 9"><rect x="0.5" y="0.5" width="8" height="8" fill="#fff" stroke="#808080"/><rect x="2" y="4" width="5" height="1" fill="#000"/></svg>
<svg style="left:19px;top:129px" width="17" height="17" viewBox="0 0 17 17"><g transform="translate(5,5)"><path d="M0.5 2.2 V8.8 A5.0 2.2 0 0 0 10.5 8.8 V2.2" fill="#D8C868" stroke="#A89848"/><path d="M0.5 4.4 A5.0 2.2 0 0 0 10.5 4.4" fill="none" stroke="#A89848" stroke-width=".7" opacity=".8"/><path d="M0.5 6.6 A5.0 2.2 0 0 0 10.5 6.6" fill="none" stroke="#A89848" stroke-width=".7" opacity=".8"/><ellipse cx="5.5" cy="2.2" rx="5.0" ry="1.8000000000000003" fill="#F4ECA8" stroke="#A89848"/><rect x="2" y="3.7" width="2.5" height="4.6" fill="#fff" opacity=".35"/></g><g transform="translate(1,1)"><path d="M0.5 2.2 V9.8 A5.5 2.2 0 0 0 11.5 9.8 V2.2" fill="#8CDC64" stroke="#3A7A28"/><path d="M0.5 4.7 A5.5 2.2 0 0 0 11.5 4.7" fill="none" stroke="#3A7A28" stroke-width=".7" opacity=".8"/><path d="M0.5 7.3 A5.5 2.2 0 0 0 11.5 7.3" fill="none" stroke="#3A7A28" stroke-width=".7" opacity=".8"/><ellipse cx="6.0" cy="2.2" rx="5.5" ry="1.8000000000000003" fill="#D8F8C0" stroke="#3A7A28"/><rect x="2" y="3.7" width="2.5" height="5.6" fill="#fff" opacity=".35"/></g></svg>
<span class="t" style="left:37.00px;top:131px;color:#000;transform:scaleX(1.0873);font-weight:bold;">C:\DataBase\Pairs.fdb</span>
<span class="t" style="left:165.00px;top:131px;color:#0000FF;transform:scaleX(1.0335);">(Диалект 3)</span>
<svg style="left:27px;top:153px" width="9" height="1" viewBox="0 0 9 1"><rect x="0" y="0" width="1" height="1" fill="#808080"/><rect x="2" y="0" width="1" height="1" fill="#808080"/><rect x="4" y="0" width="1" height="1" fill="#808080"/><rect x="6" y="0" width="1" height="1" fill="#808080"/><rect x="8" y="0" width="1" height="1" fill="#808080"/></svg>
<svg style="left:35px;top:145px" width="17" height="16" viewBox="0 0 17 16"><g transform="translate(2,2)"><path d="M0.5 2.2 V9.8 A5.5 2.2 0 0 0 11.5 9.8 V2.2" fill="#8CDC64" stroke="#3A7A28"/><ellipse cx="6.0" cy="2.2" rx="5.5" ry="1.8000000000000003" fill="#D8F8C0" stroke="#3A7A28"/><rect x="2" y="3.7" width="2.5" height="5.6" fill="#fff" opacity=".35"/></g></svg>
<span class="t" style="left:53.00px;top:147px;color:#000;transform:scaleX(0.9870);">Домены</span>
<svg style="left:22px;top:165px" width="9" height="9" viewBox="0 0 9 9"><rect x="0.5" y="0.5" width="8" height="8" fill="#fff" stroke="#808080"/><rect x="2" y="4" width="5" height="1" fill="#000"/><rect x="4" y="2" width="1" height="5" fill="#000"/></svg>
<svg style="left:31px;top:169px" width="5" height="1" viewBox="0 0 5 1"><rect x="0" y="0" width="1" height="1" fill="#808080"/><rect x="2" y="0" width="1" height="1" fill="#808080"/><rect x="4" y="0" width="1" height="1" fill="#808080"/></svg>
<svg style="left:35px;top:161px" width="17" height="16" viewBox="0 0 17 16"><rect x="1.5" y="2.5" width="14" height="11" fill="#EEF8E4" stroke="#3A7A28"/><rect x="2" y="3" width="13" height="2" fill="#7060D0"/><path d="M4 7.5H7M9 7.5H13M4 9.5H7M9 9.5H13M4 11.5H7M9 11.5H13" stroke="#707070"/></svg>
<span class="t" style="left:52.80px;top:163px;color:#000;transform:scaleX(1.0616);font-weight:bold;">Таблицы</span>
<span class="t" style="left:107.90px;top:163px;color:#0000FF;transform:scaleX(1.0224);">(28)</span>
<svg style="left:27px;top:185px" width="9" height="1" viewBox="0 0 9 1"><rect x="0" y="0" width="1" height="1" fill="#808080"/><rect x="2" y="0" width="1" height="1" fill="#808080"/><rect x="4" y="0" width="1" height="1" fill="#808080"/><rect x="6" y="0" width="1" height="1" fill="#808080"/><rect x="8" y="0" width="1" height="1" fill="#808080"/></svg>
<svg style="left:35px;top:177px" width="17" height="16" viewBox="0 0 17 16"><rect x="3.5" y="1.5" width="10" height="4" fill="#D8F4C0" stroke="#3A7A28"/><rect x="4" y="2" width="9" height="1.3" fill="#9080E0"/><path d="M8.5 5.5V7.5H3.5V9.5M8.5 7.5H13.5V9.5" stroke="#3A7A28" fill="none"/><rect x="1.5" y="9.5" width="5" height="5" fill="#C8F0A8" stroke="#3A7A28"/><rect x="10.5" y="9.5" width="5" height="5" fill="#80E050" stroke="#3A7A28"/></svg>
<span class="t" style="left:53.00px;top:179px;color:#000;transform:scaleX(0.9976);">Представления</span>
<svg style="left:22px;top:197px" width="9" height="9" viewBox="0 0 9 9"><rect x="0.5" y="0.5" width="8" height="8" fill="#fff" stroke="#808080"/><rect x="2" y="4" width="5" height="1" fill="#000"/><rect x="4" y="2" width="1" height="5" fill="#000"/></svg>
<svg style="left:31px;top:201px" width="5" height="1" viewBox="0 0 5 1"><rect x="0" y="0" width="1" height="1" fill="#808080"/><rect x="2" y="0" width="1" height="1" fill="#808080"/><rect x="4" y="0" width="1" height="1" fill="#808080"/></svg>
<svg style="left:35px;top:193px" width="17" height="16" viewBox="0 0 17 16"><g transform="translate(0,0)"><polygon points="15.30,5.00 15.18,6.07 13.53,6.46 13.13,7.09 13.49,8.75 12.58,9.32 11.25,8.28 10.50,8.36 9.43,9.68 8.42,9.32 8.41,7.63 7.87,7.09 6.18,7.08 5.82,6.07 7.14,5.00 7.22,4.25 6.18,2.92 6.75,2.01 8.41,2.37 9.04,1.97 9.43,0.32 10.50,0.20 11.25,1.72 11.96,1.97 13.49,1.25 14.25,2.01 13.53,3.54 13.78,4.25" fill="#30A8F0" stroke="#1060A8" stroke-width=".7"/><circle cx="10.5" cy="5" r="1.54" fill="#fff" stroke="#1060A8" stroke-width=".5"/><polygon points="10.50,11.00 10.37,12.11 8.65,12.52 8.24,13.18 8.62,14.91 7.67,15.50 6.28,14.41 5.50,14.50 4.39,15.87 3.33,15.50 3.32,13.74 2.76,13.18 1.00,13.17 0.63,12.11 2.00,11.00 2.09,10.22 1.00,8.83 1.59,7.88 3.32,8.26 3.98,7.85 4.39,6.13 5.50,6.00 6.28,7.59 7.02,7.85 8.62,7.09 9.41,7.88 8.65,9.48 8.91,10.22" fill="#58D028" stroke="#2A8A18" stroke-width=".7"/><circle cx="5.5" cy="11" r="1.60" fill="#fff" stroke="#2A8A18" stroke-width=".5"/></g></svg>
<span class="t" style="left:52.80px;top:195px;color:#000;transform:scaleX(1.1063);font-weight:bold;">Процедуры</span>
<span class="t" style="left:125.90px;top:195px;color:#0000FF;transform:scaleX(0.9968);">(90)</span>
<svg style="left:27px;top:217px" width="9" height="1" viewBox="0 0 9 1"><rect x="0" y="0" width="1" height="1" fill="#808080"/><rect x="2" y="0" width="1" height="1" fill="#808080"/><rect x="4" y="0" width="1" height="1" fill="#808080"/><rect x="6" y="0" width="1" height="1" fill="#808080"/><rect x="8" y="0" width="1" height="1" fill="#808080"/></svg>
<svg style="left:35px;top:209px" width="17" height="16" viewBox="0 0 17 16"><rect x="1.5" y="1.5" width="10" height="4" fill="#E8F4FF" stroke="#3A7A28"/><rect x="2" y="2" width="9" height="1.3" fill="#9080E0"/><path d="M3.5 5.5V14H6" stroke="#3A7A28" fill="none"/><rect x="6.5" y="7.5" width="9" height="3" fill="#80E050" stroke="#3A7A28"/><rect x="6.5" y="12.5" width="9" height="3" fill="#A098F0" stroke="#5040A0"/></svg>
<span class="t" style="left:53.00px;top:211px;color:#000;transform:scaleX(1.0084);">Триггеры</span>
<svg style="left:27px;top:233px" width="9" height="1" viewBox="0 0 9 1"><rect x="0" y="0" width="1" height="1" fill="#808080"/><rect x="2" y="0" width="1" height="1" fill="#808080"/><rect x="4" y="0" width="1" height="1" fill="#808080"/><rect x="6" y="0" width="1" height="1" fill="#808080"/><rect x="8" y="0" width="1" height="1" fill="#808080"/></svg>
<svg style="left:35px;top:225px" width="17" height="16" viewBox="0 0 17 16"><rect x="9.5" y="1.5" width="6" height="8" fill="#E0DCFF" stroke="#6050B0"/><path d="M11 3H13.5V5.5H11.5M13.5 5.5V8H11" stroke="#202070" fill="none"/><rect x="0.5" y="3.5" width="6" height="8" fill="#F8F0C0" stroke="#A09050"/><rect x="4.5" y="7.5" width="6" height="7" fill="#B0F090" stroke="#3A7A28"/><path d="M6 9.5H8.5V11H6.5V13H9" stroke="#3A7A28" fill="none" stroke-width=".8"/></svg>
<span class="t" style="left:53.00px;top:227px;color:#000;transform:scaleX(1.0079);">Генераторы</span>
<svg style="left:27px;top:249px" width="9" height="1" viewBox="0 0 9 1"><rect x="0" y="0" width="1" height="1" fill="#808080"/><rect x="2" y="0" width="1" height="1" fill="#808080"/><rect x="4" y="0" width="1" height="1" fill="#808080"/><rect x="6" y="0" width="1" height="1" fill="#808080"/><rect x="8" y="0" width="1" height="1" fill="#808080"/></svg>
<svg style="left:35px;top:241px" width="17" height="16" viewBox="0 0 17 16"><path d="M4 9.5L7.5 13.5L14.5 1" stroke="#3A8A28" stroke-width="3.4" fill="none"/><path d="M4 9.5L7.5 13.5L14.5 1" stroke="#90E070" stroke-width="1.6" fill="none"/><path d="M1.5 1.5L8 7M8 1.5L1.5 7" stroke="#C04060" stroke-width="2.4"/><path d="M1.5 1.5L8 7M8 1.5L1.5 7" stroke="#F8A0B8" stroke-width="1"/></svg>
<span class="t" style="left:53.00px;top:243px;color:#000;transform:scaleX(0.9917);">Исключения</span>
<svg style="left:22px;top:261px" width="9" height="9" viewBox="0 0 9 9"><rect x="0.5" y="0.5" width="8" height="8" fill="#fff" stroke="#808080"/><rect x="2" y="4" width="5" height="1" fill="#000"/><rect x="4" y="2" width="1" height="5" fill="#000"/></svg>
<svg style="left:31px;top:265px" width="5" height="1" viewBox="0 0 5 1"><rect x="0" y="0" width="1" height="1" fill="#808080"/><rect x="2" y="0" width="1" height="1" fill="#808080"/><rect x="4" y="0" width="1" height="1" fill="#808080"/></svg>
<svg style="left:35px;top:257px" width="17" height="16" viewBox="0 0 17 16"><path d="M4.5 14V5Q4.5 1.5 8.5 1.5" stroke="#3A8A28" stroke-width="2.6" fill="none"/><path d="M2 6.5H7.5" stroke="#3A8A28" stroke-width="1.8"/><path d="M1.5 14.5H8" stroke="#3A8A28" stroke-width="1.6"/><path d="M9.5 8.5L15 15M15 8.5L9.5 15" stroke="#5040C0" stroke-width="2"/></svg>
<span class="t" style="left:52.80px;top:259px;color:#000;transform:scaleX(1.0469);font-weight:bold;">Функции</span>
<span class="t" style="left:105.50px;top:259px;color:#0000FF;transform:scaleX(1.0642);">(2)</span>
<svg style="left:27px;top:281px" width="9" height="1" viewBox="0 0 9 1"><rect x="0" y="0" width="1" height="1" fill="#808080"/><rect x="2" y="0" width="1" height="1" fill="#808080"/><rect x="4" y="0" width="1" height="1" fill="#808080"/><rect x="6" y="0" width="1" height="1" fill="#808080"/><rect x="8" y="0" width="1" height="1" fill="#808080"/></svg>
<svg style="left:35px;top:273px" width="17" height="16" viewBox="0 0 17 16"><ellipse cx="8.5" cy="13" rx="7.5" ry="2.5" fill="#90D870" stroke="#3A8A28"/><circle cx="11" cy="4" r="3.3" fill="#E86088" stroke="#A03050" stroke-width=".8"/><path d="M8 12V9.5Q8 7 11.5 7Q15 7 15 9.5V12Z" fill="#E86088" stroke="#A03050" stroke-width=".8"/><circle cx="7" cy="5.5" r="3.3" fill="#F8F080" stroke="#908030" stroke-width=".8"/><path d="M2.5 13V10.5Q2.5 8.5 7 8.5Q11.5 8.5 11.5 10.5V13Z" fill="#F8F080" stroke="#908030" stroke-width=".8"/></svg>
<span class="t" style="left:53.00px;top:275px;color:#000;transform:scaleX(1.0181);">Роли</span>
<svg style="left:22px;top:293px" width="9" height="9" viewBox="0 0 9 9"><rect x="0.5" y="0.5" width="8" height="8" fill="#fff" stroke="#808080"/><rect x="2" y="4" width="5" height="1" fill="#000"/><rect x="4" y="2" width="1" height="5" fill="#000"/></svg>
<svg style="left:31px;top:297px" width="5" height="1" viewBox="0 0 5 1"><rect x="0" y="0" width="1" height="1" fill="#808080"/><rect x="2" y="0" width="1" height="1" fill="#808080"/><rect x="4" y="0" width="1" height="1" fill="#808080"/></svg>
<svg style="left:35px;top:289px" width="17" height="16" viewBox="0 0 17 16"><rect x="1.5" y="1.5" width="5" height="11" fill="#F0F8F0" stroke="#3A7A28"/><rect x="2" y="2" width="4" height="1.5" fill="#B0A8F0"/><rect x="11.5" y="0.5" width="4" height="4" fill="#90E070" stroke="#3A7A28"/><rect x="11.5" y="10.5" width="4" height="4" fill="#90E070" stroke="#3A7A28"/><path d="M6.5 6.5H9.5V2.5H11.5M9.5 6.5V12.5H11.5" stroke="#3A7A28" fill="none"/></svg>
<span class="t" style="left:52.80px;top:291px;color:#000;transform:scaleX(1.1230);font-weight:bold;">Индексы</span>
<span class="t" style="left:109.80px;top:291px;color:#0000FF;transform:scaleX(1.0326);">(80)</span>
<svg style="left:27px;top:313px" width="9" height="1" viewBox="0 0 9 1"><rect x="0" y="0" width="1" height="1" fill="#808080"/><rect x="2" y="0" width="1" height="1" fill="#808080"/><rect x="4" y="0" width="1" height="1" fill="#808080"/><rect x="6" y="0" width="1" height="1" fill="#808080"/><rect x="8" y="0" width="1" height="1" fill="#808080"/></svg>
<svg style="left:35px;top:305px" width="17" height="16" viewBox="0 0 17 16"><rect x="6.5" y="0.5" width="9" height="14" fill="#C8E8B8" stroke="#80A070" opacity=".8"/><polygon points="11.00,6.00 10.90,6.98 9.23,7.34 8.91,7.94 9.54,9.54 8.78,10.16 7.34,9.23 6.68,9.43 6.00,11.00 5.02,10.90 4.66,9.23 4.06,8.91 2.46,9.54 1.84,8.78 2.77,7.34 2.57,6.68 1.00,6.00 1.10,5.02 2.77,4.66 3.09,4.06 2.46,2.46 3.22,1.84 4.66,2.77 5.32,2.57 6.00,1.00 6.98,1.10 7.34,2.77 7.94,3.09 9.54,2.46 10.16,3.22 9.23,4.66 9.43,5.32" fill="#F8F0A0" stroke="#A09040" stroke-width=".7"/><circle cx="6" cy="6" r="1.60" fill="#fff" stroke="#A09040" stroke-width=".5"/><path d="M4.5 9.5H9.5V7L15 11L9.5 15V12.5H4.5Z" fill="#60C040" stroke="#2A7A18"/></svg>
<span class="t" style="left:53.00px;top:307px;color:#000;transform:scaleX(0.9682);">Scripts</span>
<svg style="left:11px;top:329px" width="9" height="1" viewBox="0 0 9 1"><rect x="0" y="0" width="1" height="1" fill="#808080"/><rect x="2" y="0" width="1" height="1" fill="#808080"/><rect x="4" y="0" width="1" height="1" fill="#808080"/><rect x="6" y="0" width="1" height="1" fill="#808080"/><rect x="8" y="0" width="1" height="1" fill="#808080"/></svg>
<svg style="left:19px;top:321px" width="17" height="16" viewBox="0 0 17 16"><g transform="translate(5,5)"><path d="M0.5 2.2 V8.8 A5.0 2.2 0 0 0 10.5 8.8 V2.2" fill="#D8D0A0" stroke="#A09870"/><path d="M0.5 4.4 A5.0 2.2 0 0 0 10.5 4.4" fill="none" stroke="#A09870" stroke-width=".7" opacity=".8"/><path d="M0.5 6.6 A5.0 2.2 0 0 0 10.5 6.6" fill="none" stroke="#A09870" stroke-width=".7" opacity=".8"/><ellipse cx="5.5" cy="2.2" rx="5.0" ry="1.8000000000000003" fill="#F0ECD0" stroke="#A09870"/><rect x="2" y="3.7" width="2.5" height="4.6" fill="#fff" opacity=".35"/></g><g transform="translate(1,1)"><path d="M0.5 2.2 V8.8 A5.0 2.2 0 0 0 10.5 8.8 V2.2" fill="#D0D0D0" stroke="#808080"/><path d="M0.5 4.4 A5.0 2.2 0 0 0 10.5 4.4" fill="none" stroke="#808080" stroke-width=".7" opacity=".8"/><path d="M0.5 6.6 A5.0 2.2 0 0 0 10.5 6.6" fill="none" stroke="#808080" stroke-width=".7" opacity=".8"/><ellipse cx="5.5" cy="2.2" rx="5.0" ry="1.8000000000000003" fill="#F4F4F4" stroke="#808080"/><rect x="2" y="3.7" width="2.5" height="4.6" fill="#fff" opacity=".35"/></g></svg>
<span class="t" style="left:37.50px;top:323px;color:#000;transform:scaleX(0.9697);">:C:\DataBase\PAIRS.FDB</span>
<div style="left:4px;top:358px;width:258px;height:1px;background:#fff"></div>
<div style="left:4px;top:360px;width:258px;height:1px;background:#808080"></div>
<div style="left:4px;top:361px;width:258px;height:1px;background:#fff"></div>
<div style="left:4px;top:363px;width:258px;height:1px;background:#808080"></div>
<svg style="left:265px;top:359px" width="7" height="6" viewBox="0 0 7 6"><path d="M0.8 0.8L6.2 5.2M6.2 0.8L0.8 5.2" stroke="#000" stroke-width="1.8"/></svg>
<div style="left:4px;top:369px;width:270px;height:18px;background:#808080"></div>
<span class="t" style="left:5.00px;top:372px;color:#F8F8F8;transform:scaleX(1.0100);">C:\DataBase\Pairs.fdb</span>
<div style="left:4px;top:387px;width:270px;height:21px;background:#E8E5DE"></div>
<div style="left:4px;top:407px;width:270px;height:1px;background:#fff"></div>
<div style="left:10px;top:390px;width:57px;height:18px;background:#D4D0C8"></div>
<div style="left:10px;top:389px;width:57px;height:1px;background:#fff"></div>
<div style="left:10px;top:389px;width:1px;height:18px;background:#fff"></div>
<div style="left:67px;top:389px;width:1px;height:18px;background:#000"></div>
<span class="t" style="left:14.00px;top:394px;color:#000;transform:scaleX(0.9939);">Свойства</span>
<span class="t" style="left:72.80px;top:394px;color:#000;transform:scaleX(1.0216);">Активные пользователи</span>
<div style="left:203px;top:390px;width:1px;height:16px;background:#C8C4BC"></div>
<div style="left:4px;top:410px;width:270px;height:293px;background:#fff"></div>
<div style="left:4px;top:410px;width:270px;height:1px;background:#808080"></div>
<div style="left:4px;top:410px;width:1px;height:293px;background:#808080"></div>
<div style="left:5px;top:411px;width:268px;height:17px;background:#D4D0C8"></div>
<div style="left:5px;top:411px;width:268px;height:1px;background:#fff"></div>
<div style="left:5px;top:411px;width:1px;height:17px;background:#fff"></div>
<div style="left:5px;top:428px;width:268px;height:1px;background:#808080"></div>
<div style="left:124px;top:412px;width:1px;height:16px;background:#808080"></div>
<div style="left:125px;top:412px;width:1px;height:16px;background:#fff"></div>
<div style="left:272px;top:411px;width:1px;height:17px;background:#808080"></div>
<span class="t" style="left:7.00px;top:414px;color:#000;transform:scaleX(0.9939);">Свойство</span>
<span class="t" style="left:128.00px;top:414px;color:#000;transform:scaleX(0.9629);">Значение</span>
<div style="left:5px;top:445px;width:268px;height:1px;background:#C0C0C0"></div>
<span class="t" style="left:6.00px;top:431px;color:#000;transform:scaleX(1.0488);font-weight:bold;">Версия сервера</span>
<span class="t" style="left:128.00px;top:431px;color:#000;transform:scaleX(1.0046);">WI-V6.3.1.17910 Firebird 2.1</span>
<div style="left:5px;top:462px;width:268px;height:1px;background:#C0C0C0"></div>
<span class="t" style="left:6.00px;top:448px;color:#000;transform:scaleX(1.0615);font-weight:bold;">Версия ОДС</span>
<span class="t" style="left:128.00px;top:448px;color:#000;transform:scaleX(1.0305);">11.1</span>
<div style="left:5px;top:479px;width:268px;height:1px;background:#C0C0C0"></div>
<span class="t" style="left:6.00px;top:465px;color:#000;transform:scaleX(1.0624);font-weight:bold;">Размер страницы</span>
<span class="t" style="left:128.00px;top:465px;color:#000;transform:scaleX(0.9900);">16384</span>
<div style="left:5px;top:496px;width:268px;height:1px;background:#C0C0C0"></div>
<span class="t" style="left:6.00px;top:482px;color:#000;transform:scaleX(1.0612);font-weight:bold;">Всего страниц</span>
<span class="t" style="left:128.00px;top:482px;color:#000;transform:scaleX(1.0124);">115372</span>
<div style="left:5px;top:513px;width:268px;height:1px;background:#C0C0C0"></div>
<span class="t" style="left:6.00px;top:499px;color:#000;transform:scaleX(1.0624);font-weight:bold;">Размер файла БД</span>
<span class="t" style="left:128.00px;top:499px;color:#000;transform:scaleX(0.9526);">1802 MB</span>
<div style="left:5px;top:530px;width:268px;height:1px;background:#C0C0C0"></div>
<span class="t" style="left:6.00px;top:516px;color:#000;transform:scaleX(1.0630);font-weight:bold;">Сервер</span>
<div style="left:5px;top:547px;width:268px;height:1px;background:#C0C0C0"></div>
<span class="t" style="left:6.00px;top:533px;color:#000;transform:scaleX(1.0593);font-weight:bold;">Файл БД</span>
<span class="t" style="left:128.00px;top:533px;color:#000;transform:scaleX(0.9825);">C:\DataBase\Pairs.fdb</span>
<div style="left:5px;top:564px;width:268px;height:1px;background:#C0C0C0"></div>
<span class="t" style="left:6.00px;top:550px;color:#000;transform:scaleX(1.0643);font-weight:bold;">Клиентская библи...</span>
<span class="t" style="left:128.00px;top:550px;color:#000;transform:scaleX(0.9986);">C:\WINDOWS\system32\g...</span>
<div style="left:5px;top:581px;width:268px;height:1px;background:#C0C0C0"></div>
<span class="t" style="left:6.00px;top:567px;color:#000;transform:scaleX(1.0776);font-weight:bold;">Client library version</span>
<span class="t" style="left:128.00px;top:567px;color:#000;transform:scaleX(0.9916);">6.3.1.17910</span>
<div style="left:5px;top:598px;width:268px;height:1px;background:#C0C0C0"></div>
<span class="t" style="left:6.00px;top:584px;color:#000;transform:scaleX(1.0688);font-weight:bold;">Пользователь</span>
<span class="t" style="left:128.00px;top:584px;color:#000;transform:scaleX(0.8900);">SYSDBA</span>
<div style="left:5px;top:615px;width:268px;height:1px;background:#C0C0C0"></div>
<span class="t" style="left:6.00px;top:601px;color:#000;transform:scaleX(1.0812);font-weight:bold;">Роль</span>
<div style="left:5px;top:632px;width:268px;height:1px;background:#C0C0C0"></div>
<span class="t" style="left:6.00px;top:618px;color:#000;transform:scaleX(1.0618);font-weight:bold;">Кодировка</span>
<span class="t" style="left:128.00px;top:618px;color:#000;transform:scaleX(0.8900);">NONE</span>
<div style="left:125px;top:429px;width:1px;height:204px;background:#C0C0C0"></div>
<div style="left:272px;top:429px;width:1px;height:204px;background:#C0C0C0"></div>
<div style="left:4px;top:704px;width:270px;height:21px;background:#E8E5DE"></div>
<div style="left:9px;top:704px;width:84px;height:19px;background:#D4D0C8"></div>
<div style="left:9px;top:722px;width:85px;height:1px;background:#000"></div>
<div style="left:93px;top:704px;width:1px;height:19px;background:#000"></div>
<div style="left:4px;top:704px;width:5px;height:1px;background:#000"></div>
<div style="left:93px;top:704px;width:181px;height:1px;background:#000"></div>
<span class="t" style="left:14.00px;top:706px;color:#000;transform:scaleX(0.9764);">SQL Ассистент</span>
<span class="t" style="left:98.00px;top:706px;color:#000;transform:scaleX(0.9832);">Быстрая помощь</span>
<div style="left:188px;top:706px;width:1px;height:16px;background:#C8C4BC"></div>
<div style="left:282px;top:69px;width:996px;height:24px;background:#DCD9D2;border-radius:2px"></div>
<svg style="left:284px;top:74px" width="3" height="15" viewBox="0 0 3 15"><rect x="0" y="0" width="3" height="1" fill="#808080"/><rect x="0" y="2" width="3" height="1" fill="#808080"/><rect x="0" y="4" width="3" height="1" fill="#808080"/><rect x="0" y="6" width="3" height="1" fill="#808080"/><rect x="0" y="8" width="3" height="1" fill="#808080"/><rect x="0" y="10" width="3" height="1" fill="#808080"/><rect x="0" y="12" width="3" height="1" fill="#808080"/><rect x="0" y="14" width="3" height="1" fill="#808080"/></svg>
<span class="t" style="left:293.40px;top:75px;color:#000;transform:scaleX(1.0059);">Процедура</span>
<svg style="left:354px;top:79px" width="5" height="3" viewBox="0 0 5 3"><path d="M0 0H5L2.5 3Z" fill="#000"/></svg>
<div style="left:366px;top:70px;width:1px;height:22px;background:#8C8984"></div>
<div style="left:394px;top:70px;width:1px;height:22px;background:#8C8984"></div>
<div style="left:422px;top:70px;width:1px;height:22px;background:#8C8984"></div>
<div style="left:473px;top:70px;width:1px;height:22px;background:#8C8984"></div>
<div style="left:524px;top:70px;width:1px;height:22px;background:#8C8984"></div>
<div style="left:552px;top:70px;width:1px;height:22px;background:#8C8984"></div>
<div style="left:580px;top:70px;width:1px;height:22px;background:#8C8984"></div>
<div style="left:608px;top:70px;width:1px;height:22px;background:#8C8984"></div>
<div style="left:636px;top:70px;width:1px;height:22px;background:#8C8984"></div>
<div style="left:687px;top:70px;width:1px;height:22px;background:#8C8984"></div>
<div style="left:724px;top:70px;width:1px;height:22px;background:#8C8984"></div>
<div style="left:369px;top:70px;width:23px;height:22px;background:#D2D3DA;border:1px solid #0A246A;box-sizing:border-box"></div>
<svg style="left:373px;top:74px" width="13" height="14" viewBox="0 0 13 14"><rect x="0.5" y="0.5" width="11" height="12" fill="#fff" stroke="#000"/><rect x="1" y="1" width="10" height="3" fill="#F8F020"/><path d="M1 2.5H11" stroke="#E8C000"/><path d="M3 7.5H5M3 9.5H9M3 11.5H8" stroke="#707070"/></svg>
<svg style="left:402px;top:73px" width="14" height="16" viewBox="0 0 14 16"><path d="M6.5 0.5H13.5L9.5 5H12.5L5 11H7.5L2 15.5L3.5 10H1L4.5 6H2.5Z" fill="#F8F060" stroke="#404040" stroke-width=".9"/></svg>
<svg style="left:430px;top:73px" width="12" height="16" viewBox="0 0 12 16"><path d="M1.5 1.5L10 8L1.5 14.5Z" fill="#B8F0A0" stroke="#3A8A28"/></svg>
<svg style="left:451px;top:73px" width="16" height="16" viewBox="0 0 16 16"><path d="M1.5 1.5L8 8L1.5 14.5Z" fill="#B8F0A0" stroke="#3A8A28"/><path d="M6.5 1.5L14.5 8L6.5 14.5Z" fill="#B8F0A0" stroke="#3A8A28"/></svg>
<svg style="left:479px;top:73px" width="16" height="16" viewBox="0 0 16 16"><path d="M1.5 8.5L5.5 12.5L14.5 1.5" stroke="#208A20" stroke-width="3" fill="none"/><path d="M1.5 8.5L5.5 12.5L14.5 1.5" stroke="#48E048" stroke-width="1.6" fill="none"/></svg>
<svg style="left:502px;top:73px" width="17" height="16" viewBox="0 0 17 16"><path d="M2 1L15 15M15 1L2 15" stroke="#E85878" stroke-width="2"/><path d="M2 1L15 15" stroke="#C03050" stroke-width=".8"/></svg>
<svg style="left:530px;top:74px" width="16" height="16" viewBox="0 0 16 16"><rect x="0.5" y="0.5" width="12" height="9" fill="#fff" stroke="#3040A8"/><rect x="1" y="1" width="11" height="2" fill="#3040A8"/><path d="M2 2.5H3M5 2.5H6M8 2.5H9M11 2.5H12" stroke="#fff"/><path d="M2 5.5H4M5.5 5.5H7.5M9 5.5H11M2 7.5H4M5.5 7.5H7.5M9 7.5H11" stroke="#303030"/><path d="M9 9L13 13" stroke="#F02020" stroke-width="1.2"/><path d="M15 11V15H11Z" fill="#F02020"/></svg>
<svg style="left:558px;top:73px" width="16" height="16" viewBox="0 0 16 16"><rect x="3.5" y="0.5" width="9" height="8" fill="#B8E8B0" stroke="#5040A8"/><rect x="4.5" y="1.5" width="7" height="6" fill="#A8D8B8"/><path d="M0.5 7.5H15.5V14.5H0.5Z" fill="#F0F0F0" stroke="#507040"/><rect x="1" y="11" width="14" height="3" fill="#C8C8C8"/><rect x="2" y="9" width="2" height="1" fill="#404040"/><rect x="11" y="9" width="2" height="1" fill="#F03060"/><rect x="2" y="15" width="2" height="1" fill="#505050"/><rect x="12" y="15" width="2" height="1" fill="#505050"/></svg>
<svg style="left:585px;top:73px" width="17" height="16" viewBox="0 0 17 16"><path d="M1.5 5.5Q8 -1 13.5 4.5" stroke="#404040" stroke-dasharray="1 1.6" fill="none"/><path d="M11.5 5H16.5L14 8Z" fill="#303030"/><rect x="5.5" y="8.5" width="6" height="6" fill="#fff" stroke="#4040B8" stroke-width="1.4"/></svg>
<svg style="left:613px;top:73px" width="17" height="16" viewBox="0 0 17 16"><ellipse cx="5" cy="4.5" rx="4.3" ry="3.8" fill="#F8F840" stroke="#303030" transform="rotate(-20 5 4.5)"/><circle cx="4" cy="4" r="1" fill="#303030"/><path d="M7 7L14.5 14.5" stroke="#303030" stroke-width="3"/><path d="M7 7L14.5 14.5" stroke="#F8F840" stroke-width="1.4"/><path d="M11 12L12.5 10.5M13 14L14.5 12.5" stroke="#303030" stroke-width="1.6"/><path d="M10 1H16L12 4H14L9.5 7L11 4H9Z" fill="#F8F8F8" stroke="#303030" stroke-width=".7"/><path d="M3 10H7L4 13H5.5L2 16L3 13H1.5Z" fill="#F8F8F8" stroke="#303030" stroke-width=".6"/></svg>
<svg style="left:643px;top:76px" width="16" height="10" viewBox="0 0 16 10"><path d="M0.5 9L3 1M13 9L15.5 1M4.5 5.5H7.5M6 4V7M10 5.5H13M11.5 4V7" stroke="#C4C0B8" fill="none" stroke-width=".9"/><path d="M7.5 8.5H8.5M9.5 8.5H10.5" stroke="#C4C0B8"/></svg>
<svg style="left:666px;top:76px" width="16" height="10" viewBox="0 0 16 10"><path d="M0.5 9L3 1M13 9L15.5 1M4.5 5.5H7.5M6 4V7M10 5.5H13M11.5 4V7" stroke="#C4C0B8" fill="none" stroke-width=".9"/><path d="M7.5 8.5H8.5M9.5 8.5H10.5" stroke="#C4C0B8"/></svg>
<svg style="left:693px;top:75px" width="15" height="14" viewBox="0 0 15 14"><rect x="0.5" y="0.5" width="13" height="12" fill="#fff" stroke="#707070"/><path d="M2 3.5H5M3 5.5H6M2 7.5H5M3 9.5H6" stroke="#3060E0"/><path d="M6 3.5H11M7 5.5H10M6 7.5H11M7 9.5H9" stroke="#B0B0B0"/></svg>
<svg style="left:712px;top:79px" width="5" height="3" viewBox="0 0 5 3"><path d="M0 0H5L2.5 3Z" fill="#000"/></svg>
<div style="left:728px;top:72px;width:538px;height:18px;background:#fff"></div>
<span class="t" style="left:729.50px;top:75px;color:#000;transform:scaleX(0.8783);">SVOD_PROCEDURE</span>
<div style="left:1256px;top:73px;width:9px;height:16px;background:#D4D0C8"></div>
<svg style="left:1258px;top:80px" width="5" height="3" viewBox="0 0 5 3"><path d="M0 0H5L2.5 3Z" fill="#000"/></svg>
<svg style="left:1270px;top:85px" width="5" height="3" viewBox="0 0 5 3"><path d="M0 0H5L2.5 3Z" fill="#000"/></svg>
<div style="left:282px;top:95px;width:133px;height:24px;background:#DCD9D2;border-radius:2px"></div>
<svg style="left:284px;top:99px" width="3" height="16" viewBox="0 0 3 16"><rect x="0" y="0" width="3" height="1" fill="#808080"/><rect x="0" y="2" width="3" height="1" fill="#808080"/><rect x="0" y="4" width="3" height="1" fill="#808080"/><rect x="0" y="6" width="3" height="1" fill="#808080"/><rect x="0" y="8" width="3" height="1" fill="#808080"/><rect x="0" y="10" width="3" height="1" fill="#808080"/><rect x="0" y="12" width="3" height="1" fill="#808080"/><rect x="0" y="14" width="3" height="1" fill="#808080"/></svg>
<div style="left:337px;top:96px;width:1px;height:22px;background:#8C8984"></div>
<div style="left:365px;top:96px;width:1px;height:22px;background:#8C8984"></div>
<svg style="left:291px;top:99px" width="17" height="16" viewBox="0 0 17 16"><rect x="1.5" y="0.5" width="6" height="3" fill="#fff" stroke="#B8B4AC"/><rect x="1.5" y="10.5" width="6" height="3" fill="#fff" stroke="#B8B4AC"/><path d="M3 7H9M5 5L3 7L5 9" stroke="#B8B4AC" fill="none" transform="translate(3,0)"/><rect x="10.5" y="5.5" width="5" height="3" fill="#E8E6E0" stroke="#B8B4AC"/></svg>
<svg style="left:314px;top:99px" width="17" height="16" viewBox="0 0 17 16"><rect x="1.5" y="1.5" width="6" height="3" fill="#fff" stroke="#B8B4AC"/><rect x="1.5" y="4.5" width="6" height="3" fill="#fff" stroke="#B8B4AC"/><path d="M6 12H12M8 10L6 12L8 14" stroke="#B8B4AC" fill="none"/><rect x="11.5" y="10.5" width="5" height="3" fill="#E8E6E0" stroke="#B8B4AC"/></svg>
<svg style="left:342px;top:99px" width="17" height="16" viewBox="0 0 17 16"><rect x="1.5" y="1.5" width="7" height="3" fill="#fff" stroke="#B8B4AC"/><rect x="3.5" y="5.5" width="7" height="3" fill="#E8E6E0" stroke="#B8B4AC"/><rect x="1.5" y="9.5" width="7" height="3" fill="#fff" stroke="#B8B4AC"/><path d="M11 7H15M13 5L15 7L13 9" stroke="#B8B4AC" fill="none"/></svg>
<svg style="left:371px;top:99px" width="17" height="16" viewBox="0 0 17 16"><rect x="1.5" y="1.5" width="7" height="3" fill="#fff" stroke="#B8B4AC"/><rect x="1.5" y="5.5" width="7" height="3" fill="#E8E6E0" stroke="#B8B4AC"/><rect x="1.5" y="9.5" width="7" height="3" fill="#fff" stroke="#B8B4AC"/><path d="M12 12V3M10 5L12 3L14 5" stroke="#B8B4AC" fill="none"/></svg>
<svg style="left:394px;top:99px" width="17" height="16" viewBox="0 0 17 16"><rect x="1.5" y="1.5" width="7" height="3" fill="#fff" stroke="#B8B4AC"/><rect x="1.5" y="5.5" width="7" height="3" fill="#E8E6E0" stroke="#B8B4AC"/><rect x="1.5" y="9.5" width="7" height="3" fill="#fff" stroke="#B8B4AC"/><path d="M12 4V13M10 11L12 13L14 11" stroke="#B8B4AC" fill="none"/></svg>
<div style="left:281px;top:121px;width:999px;height:20px;background:#E8E5DE"></div>
<div style="left:281px;top:140px;width:999px;height:1px;background:#fff"></div>
<div style="left:352px;top:123px;width:72px;height:18px;background:#D4D0C8"></div>
<div style="left:352px;top:122px;width:72px;height:1px;background:#fff"></div>
<div style="left:352px;top:122px;width:1px;height:18px;background:#fff"></div>
<div style="left:423px;top:122px;width:1px;height:19px;background:#000"></div>
<span class="t" style="left:294.70px;top:127px;color:#000;transform:scaleX(1.0340);"><u>Р</u>едактор</span>
<span class="t" style="left:357.00px;top:127px;color:#000;transform:scaleX(1.0695);">Результаты</span>
<span class="t" style="left:428.30px;top:127px;color:#000;transform:scaleX(0.9817);">Описание</span>
<span class="t" style="left:488.00px;top:127px;color:#000;transform:scaleX(0.9648);">Зависимости</span>
<span class="t" style="left:561.00px;top:127px;color:#000;transform:scaleX(0.9965);">Операции / Использование индексов</span>
<span class="t" style="left:760.00px;top:127px;color:#000;transform:scaleX(1.0035);">Анализ производительности</span>
<span class="t" style="left:915.80px;top:127px;color:#000;transform:scaleX(0.9785);">Анализ плана</span>
<span class="t" style="left:997.80px;top:127px;color:#000;transform:scaleX(1.0222);"><u>С</u>крипт</span>
<span class="t" style="left:1051.40px;top:127px;color:#000;transform:scaleX(0.9875);"><u>П</u>рава</span>
<span class="t" style="left:1096.30px;top:127px;color:#000;transform:scaleX(0.9906);">История версий</span>
<span class="t" style="left:1186.40px;top:127px;color:#000;transform:scaleX(0.9492);">Comparison</span>
<div style="left:482px;top:124px;width:1px;height:16px;background:#C8C4BC"></div>
<div style="left:556px;top:124px;width:1px;height:16px;background:#C8C4BC"></div>
<div style="left:754px;top:124px;width:1px;height:16px;background:#C8C4BC"></div>
<div style="left:910px;top:124px;width:1px;height:16px;background:#C8C4BC"></div>
<div style="left:989px;top:124px;width:1px;height:16px;background:#C8C4BC"></div>
<div style="left:1043px;top:124px;width:1px;height:16px;background:#C8C4BC"></div>
<div style="left:1091px;top:124px;width:1px;height:16px;background:#C8C4BC"></div>
<div style="left:1181px;top:124px;width:1px;height:16px;background:#C8C4BC"></div>
<svg style="left:1254px;top:125px" width="5" height="9" viewBox="0 0 5 9"><path d="M5 0V9L0 4.5Z" fill="#000"/></svg>
<svg style="left:1268px;top:125px" width="5" height="9" viewBox="0 0 5 9"><path d="M0 0V9L5 4.5Z" fill="#000"/></svg>
<div style="left:309px;top:146px;width:1px;height:22px;background:#808080"></div>
<div style="left:310px;top:146px;width:1px;height:22px;background:#fff"></div>
<div style="left:338px;top:146px;width:1px;height:22px;background:#808080"></div>
<div style="left:339px;top:146px;width:1px;height:22px;background:#fff"></div>
<div style="left:367px;top:146px;width:1px;height:22px;background:#808080"></div>
<div style="left:368px;top:146px;width:1px;height:22px;background:#fff"></div>
<div style="left:486px;top:146px;width:1px;height:22px;background:#808080"></div>
<div style="left:487px;top:146px;width:1px;height:22px;background:#fff"></div>
<div style="left:515px;top:146px;width:1px;height:22px;background:#808080"></div>
<div style="left:516px;top:146px;width:1px;height:22px;background:#fff"></div>
<div style="left:544px;top:146px;width:1px;height:22px;background:#808080"></div>
<div style="left:545px;top:146px;width:1px;height:22px;background:#fff"></div>
<div style="left:573px;top:146px;width:1px;height:22px;background:#808080"></div>
<div style="left:574px;top:146px;width:1px;height:22px;background:#fff"></div>
<span class="t" style="left:370.40px;top:151px;color:#000;transform:scaleX(1.0256);">Запись №:</span>
<div style="left:429px;top:146px;width:55px;height:21px;background:#fff;border-top:1px solid #808080;border-left:1px solid #808080;border-bottom:1px solid #fff;border-right:1px solid #fff;box-sizing:border-box"></div>
<div style="left:430px;top:147px;width:53px;height:1px;background:#D4D0C8"></div>
<div style="left:430px;top:147px;width:1px;height:18px;background:#D4D0C8"></div>
<span class="t" style="left:432.00px;top:150px;color:#000;transform:scaleX(0.9796);">14</span>
<div style="left:468px;top:148px;width:15px;height:9px;background:#D4D0C8;border-top:1px solid #fff;border-left:1px solid #fff;border-bottom:1px solid #808080;border-right:1px solid #808080;box-sizing:border-box"></div>
<svg style="left:473px;top:151px" width="5" height="3" viewBox="0 0 5 3"><path d="M0 3H5L2.5 0Z" fill="#000"/></svg>
<div style="left:468px;top:157px;width:15px;height:9px;background:#D4D0C8;border-top:1px solid #fff;border-left:1px solid #fff;border-bottom:1px solid #808080;border-right:1px solid #808080;box-sizing:border-box"></div>
<svg style="left:473px;top:160px" width="5" height="3" viewBox="0 0 5 3"><path d="M0 0H5L2.5 3Z" fill="#000"/></svg>
<svg style="left:287px;top:150px" width="12" height="15" viewBox="0 0 12 15"><path d="M0.5 0.5H10.5L6.5 4.5V8.5H4.5V4.5Z" fill="#fff" stroke="#000"/><path d="M2 1.5H9L6 4.5H5Z" fill="#40C0C0"/><path d="M3 1.5H8L6 3.5H5Z" fill="#fff"/><path d="M1 10.5H4M5 10.5H8M9 10.5H12" stroke="#000"/><path d="M1 12.5H4M5 12.5H8M9 12.5H12" stroke="#A0A0A0"/></svg>
<svg style="left:316px;top:150px" width="17" height="15" viewBox="0 0 17 15"><path d="M0.5 0.5H10.5L6.5 4.5V8.5H4.5V4.5Z" fill="#fff" stroke="#000"/><path d="M2 1.5H9L6 4.5H5Z" fill="#40C0C0"/><path d="M3 1.5H8L6 3.5H5Z" fill="#fff"/><rect x="5.5" y="3.5" width="11" height="11" fill="#fff" stroke="#000"/><rect x="6" y="3" width="11" height="2" fill="#000080"/><path d="M7 8.5H9M7 11.5H9M11.5 7.5H13.5V9.5H11.5ZM11.5 10.5H13.5V12.5H11.5Z" stroke="#000" fill="none"/></svg>
<svg style="left:345px;top:150px" width="16" height="15" viewBox="0 0 16 15"><path d="M0.5 0.5H10.5L6.5 4.5V8.5H4.5V4.5Z" fill="#fff" stroke="#000"/><path d="M2 1.5H9L6 4.5H5Z" fill="#40C0C0"/><path d="M3 1.5H8L6 3.5H5Z" fill="#fff"/><path d="M8.5 6.5H10.5V9.5H13.5V11.5H10.5V14.5H8.5V11.5H5.5V9.5H8.5Z" fill="#fff" stroke="#000"/></svg>
<svg style="left:493px;top:149px" width="17" height="16" viewBox="0 0 17 16"><path d="M0.5 3.5L3.5 0.5H15.5V11.5L12.5 14.5H0.5Z" fill="#F8F080" stroke="#1E5A10"/><path d="M1 3L3.7 1H15L12.3 3Z" fill="#A8E080"/><rect x="1" y="4" width="3.5" height="3" fill="#B8F098"/><rect x="5" y="4" width="7" height="3" fill="#F8F060"/><rect x="1" y="7.5" width="3.5" height="3" fill="#B8F098"/><rect x="5" y="7.5" width="7" height="3" fill="#F8F060"/><rect x="1" y="11" width="3.5" height="3" fill="#F8C8C8"/><rect x="5" y="11" width="3.5" height="3" fill="#F8B8B8"/><rect x="9" y="11" width="3" height="3" fill="#C8B8F8"/><path d="M13 3.8L15 2V7L13 9Z" fill="#F8F080"/><path d="M13 9.5L15 7.5V11L13 13Z" fill="#D8C8F8"/><path d="M0.5 3.5H12.5V14.5M12.5 3.5L15.5 0.5" stroke="#1E5A10" fill="none"/></svg>
<svg style="left:525px;top:152px" width="10" height="10" viewBox="0 0 10 10"><path d="M9 1.5H1L5 5L1 8.5H9" stroke="#303030" stroke-width="1.3" fill="none"/></svg>
<span class="t" style="left:550.50px;top:151px;color:#000040;transform:scaleX(0.9832);">ÖΩ</span>
<svg style="left:583px;top:153px" width="11" height="9" viewBox="0 0 11 9"><rect x="0" y="0" width="2" height="9" fill="#000"/><path d="M10 0V9L3 4.5Z" fill="#000"/></svg>
<svg style="left:609px;top:153px" width="8" height="9" viewBox="0 0 8 9"><path d="M8 0V9L1 4.5Z" fill="#000"/></svg>
<svg style="left:633px;top:153px" width="8" height="9" viewBox="0 0 8 9"><path d="M0 0V9L7 4.5Z" fill="#000"/></svg>
<svg style="left:656px;top:153px" width="11" height="9" viewBox="0 0 11 9"><path d="M0 0V9L7 4.5Z" fill="#000"/><rect x="8" y="0" width="2" height="9" fill="#000"/></svg>
<svg style="left:677px;top:149px" width="15" height="15" viewBox="0 0 15 15"><path d="M11.5 4A5 5 0 1 0 12.5 9.5" stroke="#fff" stroke-width="3" fill="none"/><path d="M11.5 4A5 5 0 1 0 12.5 9.5" stroke="#B0ACA4" stroke-width="1.2" fill="none"/><path d="M8 3.5H12.5V8" stroke="#B0ACA4" fill="none" stroke-width="1.2"/></svg>
<span class="t" style="left:1168.40px;top:152px;color:#000;transform:scaleX(1.0891);font-weight:bold;">27 records fetched</span>
<div style="left:281px;top:171px;width:982px;height:525px;background:#fff"></div>
<div style="left:281px;top:171px;width:998px;height:1px;background:#808080"></div>
<div style="left:281px;top:171px;width:1px;height:525px;background:#808080"></div>
<div style="left:282px;top:172px;width:818px;height:17px;background:#D4D0C8"></div>
<div style="left:913px;top:172px;width:93px;height:17px;background:#B8B4AC"></div>
<div style="left:282px;top:172px;width:818px;height:1px;background:#fff"></div>
<div style="left:282px;top:189px;width:818px;height:1px;background:#808080"></div>
<div style="left:282px;top:172px;width:1px;height:17px;background:#fff"></div>
<div style="left:1100px;top:171px;width:1px;height:19px;background:#808080"></div>
<div style="left:293px;top:173px;width:1px;height:16px;background:#808080"></div>
<div style="left:294px;top:173px;width:1px;height:16px;background:#fff"></div>
<span class="t" style="left:296.00px;top:175px;color:#000;transform:scaleX(0.9089);">P_PAIR</span>
<div style="left:348px;top:173px;width:1px;height:16px;background:#808080"></div>
<div style="left:349px;top:173px;width:1px;height:16px;background:#fff"></div>
<span class="t" style="left:351.00px;top:175px;color:#000;transform:scaleX(0.8900);">P_DA_MIN</span>
<div style="left:442px;top:173px;width:1px;height:16px;background:#808080"></div>
<div style="left:443px;top:173px;width:1px;height:16px;background:#fff"></div>
<span class="t" style="left:445.00px;top:175px;color:#000;transform:scaleX(0.8900);">P_TI_MIN</span>
<div style="left:536px;top:173px;width:1px;height:16px;background:#808080"></div>
<div style="left:537px;top:173px;width:1px;height:16px;background:#fff"></div>
<span class="t" style="left:539.00px;top:175px;color:#000;transform:scaleX(0.8900);">P_DA_MAX</span>
<div style="left:630px;top:173px;width:1px;height:16px;background:#808080"></div>
<div style="left:631px;top:173px;width:1px;height:16px;background:#fff"></div>
<span class="t" style="left:633.00px;top:175px;color:#000;transform:scaleX(0.8900);">P_TI_MAX</span>
<div style="left:724px;top:173px;width:1px;height:16px;background:#808080"></div>
<div style="left:725px;top:173px;width:1px;height:16px;background:#fff"></div>
<span class="t" style="left:727.00px;top:175px;color:#000;transform:scaleX(0.8900);">P_OP</span>
<div style="left:818px;top:173px;width:1px;height:16px;background:#808080"></div>
<div style="left:819px;top:173px;width:1px;height:16px;background:#fff"></div>
<span class="t" style="left:821.00px;top:175px;color:#000;transform:scaleX(0.8900);">P_CL</span>
<div style="left:912px;top:173px;width:1px;height:16px;background:#808080"></div>
<div style="left:913px;top:173px;width:1px;height:16px;background:#fff"></div>
<span class="t" style="left:915.00px;top:175px;color:#000;transform:scaleX(0.8900);">P_POINT</span>
<div style="left:1006px;top:173px;width:1px;height:16px;background:#808080"></div>
<div style="left:1007px;top:173px;width:1px;height:16px;background:#fff"></div>
<span class="t" style="left:1009.00px;top:175px;color:#000;transform:scaleX(0.8900);">P_POINT_MOD</span>
<svg style="left:992px;top:177px" width="9" height="8" viewBox="0 0 9 8"><path d="M0.5 0.5H8.5L4.5 7.5Z" fill="none" stroke="#E8E8E8"/><path d="M4.5 7.5L8.5 0.5" stroke="#808080"/></svg>
<div style="left:282px;top:190px;width:11px;height:16px;background:#D4D0C8"></div>
<div style="left:282px;top:190px;width:11px;height:1px;background:#fff"></div>
<div style="left:282px;top:190px;width:1px;height:16px;background:#fff"></div>
<div style="left:282px;top:206px;width:11px;height:1px;background:#808080"></div>
<span class="t" style="left:296.00px;top:192px;color:#000;transform:scaleX(0.8900);">AUDCHF</span>
<span class="t" style="left:351.00px;top:192px;color:#000;transform:scaleX(0.9911);">22.10.2007</span>
<span class="t" style="left:445.00px;top:192px;color:#000;transform:scaleX(0.9914);">00:00:00</span>
<span class="t" style="left:539.00px;top:192px;color:#000;transform:scaleX(0.9911);">26.10.2007</span>
<span class="t" style="left:633.00px;top:192px;color:#000;transform:scaleX(0.9914);">22:58:00</span>
<span class="t" style="left:776.59px;top:192px;color:#000;transform:scaleX(0.9900);">1,03070</span>
<span class="t" style="left:870.59px;top:192px;color:#000;transform:scaleX(0.9900);">1,06860</span>
<span class="t" style="left:976.71px;top:192px;color:#000;transform:scaleX(0.9900);">3 790</span>
<span class="t" style="left:1070.71px;top:192px;color:#000;transform:scaleX(0.9900);">3 790</span>
<div style="left:282px;top:207px;width:11px;height:16px;background:#D4D0C8"></div>
<div style="left:282px;top:207px;width:11px;height:1px;background:#fff"></div>
<div style="left:282px;top:207px;width:1px;height:16px;background:#fff"></div>
<div style="left:282px;top:223px;width:11px;height:1px;background:#808080"></div>
<span class="t" style="left:296.00px;top:209px;color:#000;transform:scaleX(0.8900);">AUDJPY</span>
<span class="t" style="left:351.00px;top:209px;color:#000;transform:scaleX(0.9911);">22.10.2007</span>
<span class="t" style="left:445.00px;top:209px;color:#000;transform:scaleX(0.9914);">00:00:00</span>
<span class="t" style="left:539.00px;top:209px;color:#000;transform:scaleX(0.9911);">26.10.2007</span>
<span class="t" style="left:633.00px;top:209px;color:#000;transform:scaleX(0.9914);">22:58:00</span>
<span class="t" style="left:764.46px;top:209px;color:#000;transform:scaleX(0.9900);">101,25000</span>
<span class="t" style="left:858.46px;top:209px;color:#000;transform:scaleX(0.9900);">104,86000</span>
<span class="t" style="left:976.71px;top:209px;color:#000;transform:scaleX(0.9900);">3 610</span>
<span class="t" style="left:1070.71px;top:209px;color:#000;transform:scaleX(0.9900);">3 610</span>
<div style="left:282px;top:224px;width:11px;height:16px;background:#D4D0C8"></div>
<div style="left:282px;top:224px;width:11px;height:1px;background:#fff"></div>
<div style="left:282px;top:224px;width:1px;height:16px;background:#fff"></div>
<div style="left:282px;top:240px;width:11px;height:1px;background:#808080"></div>
<span class="t" style="left:296.00px;top:226px;color:#000;transform:scaleX(0.8900);">AUDUSD</span>
<span class="t" style="left:351.00px;top:226px;color:#000;transform:scaleX(0.9911);">22.10.2007</span>
<span class="t" style="left:445.00px;top:226px;color:#000;transform:scaleX(0.9914);">00:00:00</span>
<span class="t" style="left:539.00px;top:226px;color:#000;transform:scaleX(0.9911);">26.10.2007</span>
<span class="t" style="left:633.00px;top:226px;color:#000;transform:scaleX(0.9914);">22:58:00</span>
<span class="t" style="left:776.59px;top:226px;color:#000;transform:scaleX(0.9900);">0,88860</span>
<span class="t" style="left:870.59px;top:226px;color:#000;transform:scaleX(0.9900);">0,91820</span>
<span class="t" style="left:976.71px;top:226px;color:#000;transform:scaleX(0.9900);">2 960</span>
<span class="t" style="left:1070.71px;top:226px;color:#000;transform:scaleX(0.9900);">2 960</span>
<div style="left:282px;top:241px;width:11px;height:16px;background:#D4D0C8"></div>
<div style="left:282px;top:241px;width:11px;height:1px;background:#fff"></div>
<div style="left:282px;top:241px;width:1px;height:16px;background:#fff"></div>
<div style="left:282px;top:257px;width:11px;height:1px;background:#808080"></div>
<span class="t" style="left:296.00px;top:243px;color:#000;transform:scaleX(0.8900);">NZDCHF</span>
<span class="t" style="left:351.00px;top:243px;color:#000;transform:scaleX(0.9911);">22.10.2007</span>
<span class="t" style="left:445.00px;top:243px;color:#000;transform:scaleX(0.9914);">00:00:00</span>
<span class="t" style="left:539.00px;top:243px;color:#000;transform:scaleX(0.9911);">26.10.2007</span>
<span class="t" style="left:633.00px;top:243px;color:#000;transform:scaleX(0.9914);">22:58:00</span>
<span class="t" style="left:776.59px;top:243px;color:#000;transform:scaleX(0.9900);">0,86460</span>
<span class="t" style="left:870.59px;top:243px;color:#000;transform:scaleX(0.9900);">0,89130</span>
<span class="t" style="left:976.71px;top:243px;color:#000;transform:scaleX(0.9900);">2 670</span>
<span class="t" style="left:1070.71px;top:243px;color:#000;transform:scaleX(0.9900);">2 670</span>
<div style="left:282px;top:258px;width:11px;height:16px;background:#D4D0C8"></div>
<div style="left:282px;top:258px;width:11px;height:1px;background:#fff"></div>
<div style="left:282px;top:258px;width:1px;height:16px;background:#fff"></div>
<div style="left:282px;top:274px;width:11px;height:1px;background:#808080"></div>
<span class="t" style="left:296.00px;top:260px;color:#000;transform:scaleX(0.8900);">NZDJPY</span>
<span class="t" style="left:351.00px;top:260px;color:#000;transform:scaleX(0.9911);">22.10.2007</span>
<span class="t" style="left:445.00px;top:260px;color:#000;transform:scaleX(0.9914);">00:00:00</span>
<span class="t" style="left:539.00px;top:260px;color:#000;transform:scaleX(0.9911);">26.10.2007</span>
<span class="t" style="left:633.00px;top:260px;color:#000;transform:scaleX(0.9914);">22:58:00</span>
<span class="t" style="left:770.52px;top:260px;color:#000;transform:scaleX(0.9900);">84,88000</span>
<span class="t" style="left:864.52px;top:260px;color:#000;transform:scaleX(0.9900);">87,46000</span>
<span class="t" style="left:976.71px;top:260px;color:#000;transform:scaleX(0.9900);">2 580</span>
<span class="t" style="left:1070.71px;top:260px;color:#000;transform:scaleX(0.9900);">2 580</span>
<div style="left:282px;top:275px;width:11px;height:16px;background:#D4D0C8"></div>
<div style="left:282px;top:275px;width:11px;height:1px;background:#fff"></div>
<div style="left:282px;top:275px;width:1px;height:16px;background:#fff"></div>
<div style="left:282px;top:291px;width:11px;height:1px;background:#808080"></div>
<span class="t" style="left:296.00px;top:277px;color:#000;transform:scaleX(0.8900);">AUDCAD</span>
<span class="t" style="left:351.00px;top:277px;color:#000;transform:scaleX(0.9911);">22.10.2007</span>
<span class="t" style="left:445.00px;top:277px;color:#000;transform:scaleX(0.9914);">00:00:00</span>
<span class="t" style="left:539.00px;top:277px;color:#000;transform:scaleX(0.9911);">26.10.2007</span>
<span class="t" style="left:633.00px;top:277px;color:#000;transform:scaleX(0.9914);">22:58:00</span>
<span class="t" style="left:776.59px;top:277px;color:#000;transform:scaleX(0.9900);">0,85830</span>
<span class="t" style="left:870.59px;top:277px;color:#000;transform:scaleX(0.9900);">0,88320</span>
<span class="t" style="left:976.71px;top:277px;color:#000;transform:scaleX(0.9900);">2 490</span>
<span class="t" style="left:1070.71px;top:277px;color:#000;transform:scaleX(0.9900);">2 490</span>
<div style="left:282px;top:292px;width:11px;height:16px;background:#D4D0C8"></div>
<div style="left:282px;top:292px;width:11px;height:1px;background:#fff"></div>
<div style="left:282px;top:292px;width:1px;height:16px;background:#fff"></div>
<div style="left:282px;top:308px;width:11px;height:1px;background:#808080"></div>
<span class="t" style="left:296.00px;top:294px;color:#000;transform:scaleX(0.8900);">NZDUSD</span>
<span class="t" style="left:351.00px;top:294px;color:#000;transform:scaleX(0.9911);">22.10.2007</span>
<span class="t" style="left:445.00px;top:294px;color:#000;transform:scaleX(0.9914);">00:00:00</span>
<span class="t" style="left:539.00px;top:294px;color:#000;transform:scaleX(0.9911);">26.10.2007</span>
<span class="t" style="left:633.00px;top:294px;color:#000;transform:scaleX(0.9914);">22:56:00</span>
<span class="t" style="left:776.59px;top:294px;color:#000;transform:scaleX(0.9900);">0,74510</span>
<span class="t" style="left:870.59px;top:294px;color:#000;transform:scaleX(0.9900);">0,76600</span>
<span class="t" style="left:976.71px;top:294px;color:#000;transform:scaleX(0.9900);">2 090</span>
<span class="t" style="left:1070.71px;top:294px;color:#000;transform:scaleX(0.9900);">2 090</span>
<div style="left:282px;top:309px;width:11px;height:16px;background:#D4D0C8"></div>
<div style="left:282px;top:309px;width:11px;height:1px;background:#fff"></div>
<div style="left:282px;top:309px;width:1px;height:16px;background:#fff"></div>
<div style="left:282px;top:325px;width:11px;height:1px;background:#808080"></div>
<span class="t" style="left:296.00px;top:311px;color:#000;transform:scaleX(0.8900);">NZDCAD</span>
<span class="t" style="left:351.00px;top:311px;color:#000;transform:scaleX(0.9911);">22.10.2007</span>
<span class="t" style="left:445.00px;top:311px;color:#000;transform:scaleX(0.9914);">00:00:00</span>
<span class="t" style="left:539.00px;top:311px;color:#000;transform:scaleX(0.9911);">26.10.2007</span>
<span class="t" style="left:633.00px;top:311px;color:#000;transform:scaleX(0.9914);">22:58:00</span>
<span class="t" style="left:776.59px;top:311px;color:#000;transform:scaleX(0.9900);">0,71960</span>
<span class="t" style="left:870.59px;top:311px;color:#000;transform:scaleX(0.9900);">0,73670</span>
<span class="t" style="left:976.71px;top:311px;color:#000;transform:scaleX(0.9900);">1 710</span>
<span class="t" style="left:1070.71px;top:311px;color:#000;transform:scaleX(0.9900);">1 710</span>
<div style="left:282px;top:326px;width:11px;height:16px;background:#D4D0C8"></div>
<div style="left:282px;top:326px;width:11px;height:1px;background:#fff"></div>
<div style="left:282px;top:326px;width:1px;height:16px;background:#fff"></div>
<div style="left:282px;top:342px;width:11px;height:1px;background:#808080"></div>
<span class="t" style="left:296.00px;top:328px;color:#000;transform:scaleX(0.8900);">EURCHF</span>
<span class="t" style="left:351.00px;top:328px;color:#000;transform:scaleX(0.9911);">22.10.2007</span>
<span class="t" style="left:445.00px;top:328px;color:#000;transform:scaleX(0.9914);">00:00:00</span>
<span class="t" style="left:539.00px;top:328px;color:#000;transform:scaleX(0.9911);">26.10.2007</span>
<span class="t" style="left:633.00px;top:328px;color:#000;transform:scaleX(0.9914);">22:57:00</span>
<span class="t" style="left:776.59px;top:328px;color:#000;transform:scaleX(0.9900);">1,66330</span>
<span class="t" style="left:870.59px;top:328px;color:#000;transform:scaleX(0.9900);">1,67540</span>
<span class="t" style="left:976.71px;top:328px;color:#000;transform:scaleX(0.9900);">1 210</span>
<span class="t" style="left:1070.71px;top:328px;color:#000;transform:scaleX(0.9900);">1 210</span>
<div style="left:282px;top:343px;width:11px;height:16px;background:#D4D0C8"></div>
<div style="left:282px;top:343px;width:11px;height:1px;background:#fff"></div>
<div style="left:282px;top:343px;width:1px;height:16px;background:#fff"></div>
<div style="left:282px;top:359px;width:11px;height:1px;background:#808080"></div>
<span class="t" style="left:296.00px;top:345px;color:#000;transform:scaleX(0.8900);">EURJPY</span>
<span class="t" style="left:351.00px;top:345px;color:#000;transform:scaleX(0.9911);">22.10.2007</span>
<span class="t" style="left:445.00px;top:345px;color:#000;transform:scaleX(0.9914);">00:00:00</span>
<span class="t" style="left:539.00px;top:345px;color:#000;transform:scaleX(0.9911);">26.10.2007</span>
<span class="t" style="left:633.00px;top:345px;color:#000;transform:scaleX(0.9914);">22:58:00</span>
<span class="t" style="left:764.46px;top:345px;color:#000;transform:scaleX(0.9900);">163,29000</span>
<span class="t" style="left:858.46px;top:345px;color:#000;transform:scaleX(0.9900);">164,33000</span>
<span class="t" style="left:976.71px;top:345px;color:#000;transform:scaleX(0.9900);">1 040</span>
<span class="t" style="left:1070.71px;top:345px;color:#000;transform:scaleX(0.9900);">1 040</span>
<div style="left:282px;top:360px;width:11px;height:16px;background:#D4D0C8"></div>
<div style="left:282px;top:360px;width:11px;height:1px;background:#fff"></div>
<div style="left:282px;top:360px;width:1px;height:16px;background:#fff"></div>
<div style="left:282px;top:376px;width:11px;height:1px;background:#808080"></div>
<span class="t" style="left:296.00px;top:362px;color:#000;transform:scaleX(0.8900);">CADCHF</span>
<span class="t" style="left:351.00px;top:362px;color:#000;transform:scaleX(0.9911);">22.10.2007</span>
<span class="t" style="left:445.00px;top:362px;color:#000;transform:scaleX(0.9914);">00:00:00</span>
<span class="t" style="left:539.00px;top:362px;color:#000;transform:scaleX(0.9911);">26.10.2007</span>
<span class="t" style="left:633.00px;top:362px;color:#000;transform:scaleX(0.9914);">22:58:00</span>
<span class="t" style="left:776.59px;top:362px;color:#000;transform:scaleX(0.9900);">1,20050</span>
<span class="t" style="left:870.59px;top:362px;color:#000;transform:scaleX(0.9900);">1,20940</span>
<span class="t" style="left:985.81px;top:362px;color:#000;transform:scaleX(0.9900);">890</span>
<span class="t" style="left:1079.81px;top:362px;color:#000;transform:scaleX(0.9900);">890</span>
<div style="left:282px;top:377px;width:11px;height:16px;background:#D4D0C8"></div>
<div style="left:282px;top:377px;width:11px;height:1px;background:#fff"></div>
<div style="left:282px;top:377px;width:1px;height:16px;background:#fff"></div>
<div style="left:282px;top:393px;width:11px;height:1px;background:#808080"></div>
<span class="t" style="left:296.00px;top:379px;color:#000;transform:scaleX(0.8900);">CADJPY</span>
<span class="t" style="left:351.00px;top:379px;color:#000;transform:scaleX(0.9911);">22.10.2007</span>
<span class="t" style="left:445.00px;top:379px;color:#000;transform:scaleX(0.9914);">00:00:00</span>
<span class="t" style="left:539.00px;top:379px;color:#000;transform:scaleX(0.9911);">26.10.2007</span>
<span class="t" style="left:633.00px;top:379px;color:#000;transform:scaleX(0.9914);">22:58:00</span>
<span class="t" style="left:764.46px;top:379px;color:#000;transform:scaleX(1.0057);">117,87000</span>
<span class="t" style="left:858.46px;top:379px;color:#000;transform:scaleX(1.0057);">118,65000</span>
<span class="t" style="left:985.81px;top:379px;color:#000;transform:scaleX(0.9900);">780</span>
<span class="t" style="left:1079.81px;top:379px;color:#000;transform:scaleX(0.9900);">780</span>
<div style="left:282px;top:394px;width:11px;height:16px;background:#D4D0C8"></div>
<div style="left:282px;top:394px;width:11px;height:1px;background:#fff"></div>
<div style="left:282px;top:394px;width:1px;height:16px;background:#fff"></div>
<div style="left:282px;top:410px;width:11px;height:1px;background:#808080"></div>
<span class="t" style="left:296.00px;top:396px;color:#000;transform:scaleX(0.8900);">GBPCHF</span>
<span class="t" style="left:351.00px;top:396px;color:#000;transform:scaleX(0.9911);">22.10.2007</span>
<span class="t" style="left:445.00px;top:396px;color:#000;transform:scaleX(0.9914);">00:00:00</span>
<span class="t" style="left:539.00px;top:396px;color:#000;transform:scaleX(0.9911);">26.10.2007</span>
<span class="t" style="left:633.00px;top:396px;color:#000;transform:scaleX(0.9914);">22:58:00</span>
<span class="t" style="left:776.59px;top:396px;color:#000;transform:scaleX(0.9900);">2,38250</span>
<span class="t" style="left:870.59px;top:396px;color:#000;transform:scaleX(0.9900);">2,38900</span>
<span class="t" style="left:985.81px;top:396px;color:#000;transform:scaleX(0.9900);">650</span>
<span class="t" style="left:1079.81px;top:396px;color:#000;transform:scaleX(0.9900);">650</span>
<div style="left:282px;top:411px;width:11px;height:16px;background:#D4D0C8"></div>
<div style="left:282px;top:411px;width:11px;height:1px;background:#fff"></div>
<div style="left:282px;top:411px;width:1px;height:16px;background:#fff"></div>
<div style="left:282px;top:427px;width:11px;height:1px;background:#808080"></div>
<div style="left:293px;top:411px;width:807px;height:16px;background:#000080"></div>
<div style="left:294px;top:411px;width:54px;height:16px;background:#0A246A;outline:1px dotted #F0D060;outline-offset:-1px"></div>
<svg style="left:285px;top:415px" width="5" height="9" viewBox="0 0 5 9"><path d="M0 0V9L4.5 4.5Z" fill="#000"/></svg>
<span class="t" style="left:296.00px;top:413px;color:#fff;transform:scaleX(0.8900);">AUDNZD</span>
<span class="t" style="left:351.00px;top:413px;color:#fff;transform:scaleX(0.9911);">22.10.2007</span>
<span class="t" style="left:445.00px;top:413px;color:#fff;transform:scaleX(0.9914);">00:00:00</span>
<span class="t" style="left:539.00px;top:413px;color:#fff;transform:scaleX(0.9911);">26.10.2007</span>
<span class="t" style="left:633.00px;top:413px;color:#fff;transform:scaleX(0.9914);">22:58:00</span>
<span class="t" style="left:776.59px;top:413px;color:#fff;transform:scaleX(0.9900);">1,19170</span>
<span class="t" style="left:870.59px;top:413px;color:#fff;transform:scaleX(0.9900);">1,19800</span>
<span class="t" style="left:985.81px;top:413px;color:#fff;transform:scaleX(0.9900);">630</span>
<span class="t" style="left:1079.81px;top:413px;color:#fff;transform:scaleX(0.9900);">630</span>
<div style="left:282px;top:428px;width:11px;height:16px;background:#D4D0C8"></div>
<div style="left:282px;top:428px;width:11px;height:1px;background:#fff"></div>
<div style="left:282px;top:428px;width:1px;height:16px;background:#fff"></div>
<div style="left:282px;top:444px;width:11px;height:1px;background:#808080"></div>
<span class="t" style="left:296.00px;top:430px;color:#000;transform:scaleX(0.8900);">EURUSD</span>
<span class="t" style="left:351.00px;top:430px;color:#000;transform:scaleX(0.9911);">22.10.2007</span>
<span class="t" style="left:445.00px;top:430px;color:#000;transform:scaleX(0.9914);">00:00:00</span>
<span class="t" style="left:539.00px;top:430px;color:#000;transform:scaleX(0.9911);">26.10.2007</span>
<span class="t" style="left:633.00px;top:430px;color:#000;transform:scaleX(0.9914);">22:58:00</span>
<span class="t" style="left:776.59px;top:430px;color:#000;transform:scaleX(0.9900);">1,43320</span>
<span class="t" style="left:870.59px;top:430px;color:#000;transform:scaleX(0.9900);">1,43920</span>
<span class="t" style="left:985.81px;top:430px;color:#000;transform:scaleX(0.9900);">600</span>
<span class="t" style="left:1079.81px;top:430px;color:#000;transform:scaleX(0.9900);">600</span>
<div style="left:282px;top:445px;width:11px;height:16px;background:#D4D0C8"></div>
<div style="left:282px;top:445px;width:11px;height:1px;background:#fff"></div>
<div style="left:282px;top:445px;width:1px;height:16px;background:#fff"></div>
<div style="left:282px;top:461px;width:11px;height:1px;background:#808080"></div>
<span class="t" style="left:296.00px;top:447px;color:#000;transform:scaleX(0.8900);">GBPJPY</span>
<span class="t" style="left:351.00px;top:447px;color:#000;transform:scaleX(0.9911);">22.10.2007</span>
<span class="t" style="left:445.00px;top:447px;color:#000;transform:scaleX(0.9914);">00:00:00</span>
<span class="t" style="left:539.00px;top:447px;color:#000;transform:scaleX(0.9911);">26.10.2007</span>
<span class="t" style="left:633.00px;top:447px;color:#000;transform:scaleX(0.9914);">22:58:00</span>
<span class="t" style="left:764.46px;top:447px;color:#000;transform:scaleX(0.9900);">233,93000</span>
<span class="t" style="left:858.46px;top:447px;color:#000;transform:scaleX(0.9900);">234,37000</span>
<span class="t" style="left:985.81px;top:447px;color:#000;transform:scaleX(0.9900);">440</span>
<span class="t" style="left:1079.81px;top:447px;color:#000;transform:scaleX(0.9900);">440</span>
<div style="left:282px;top:462px;width:11px;height:16px;background:#D4D0C8"></div>
<div style="left:282px;top:462px;width:11px;height:1px;background:#fff"></div>
<div style="left:282px;top:462px;width:1px;height:16px;background:#fff"></div>
<div style="left:282px;top:478px;width:11px;height:1px;background:#808080"></div>
<span class="t" style="left:296.00px;top:464px;color:#000;transform:scaleX(0.8900);">USDCHF</span>
<span class="t" style="left:351.00px;top:464px;color:#000;transform:scaleX(0.9911);">22.10.2007</span>
<span class="t" style="left:445.00px;top:464px;color:#000;transform:scaleX(0.9914);">00:00:00</span>
<span class="t" style="left:539.00px;top:464px;color:#000;transform:scaleX(0.9911);">26.10.2007</span>
<span class="t" style="left:633.00px;top:464px;color:#000;transform:scaleX(0.9914);">22:58:00</span>
<span class="t" style="left:776.59px;top:464px;color:#000;transform:scaleX(0.9900);">1,16020</span>
<span class="t" style="left:870.59px;top:464px;color:#000;transform:scaleX(0.9900);">1,16390</span>
<span class="t" style="left:985.81px;top:464px;color:#000;transform:scaleX(0.9900);">370</span>
<span class="t" style="left:1079.81px;top:464px;color:#000;transform:scaleX(0.9900);">370</span>
<div style="left:282px;top:479px;width:11px;height:16px;background:#D4D0C8"></div>
<div style="left:282px;top:479px;width:11px;height:1px;background:#fff"></div>
<div style="left:282px;top:479px;width:1px;height:16px;background:#fff"></div>
<div style="left:282px;top:495px;width:11px;height:1px;background:#808080"></div>
<span class="t" style="left:296.00px;top:481px;color:#000;transform:scaleX(0.8900);">EURGBP</span>
<span class="t" style="left:351.00px;top:481px;color:#000;transform:scaleX(0.9911);">22.10.2007</span>
<span class="t" style="left:445.00px;top:481px;color:#000;transform:scaleX(0.9914);">00:00:00</span>
<span class="t" style="left:539.00px;top:481px;color:#000;transform:scaleX(0.9911);">26.10.2007</span>
<span class="t" style="left:633.00px;top:481px;color:#000;transform:scaleX(0.9914);">22:58:00</span>
<span class="t" style="left:776.59px;top:481px;color:#000;transform:scaleX(0.9900);">0,69790</span>
<span class="t" style="left:870.59px;top:481px;color:#000;transform:scaleX(1.0106);">0,70110</span>
<span class="t" style="left:985.81px;top:481px;color:#000;transform:scaleX(0.9900);">320</span>
<span class="t" style="left:1079.81px;top:481px;color:#000;transform:scaleX(0.9900);">320</span>
<div style="left:282px;top:496px;width:11px;height:16px;background:#D4D0C8"></div>
<div style="left:282px;top:496px;width:11px;height:1px;background:#fff"></div>
<div style="left:282px;top:496px;width:1px;height:16px;background:#fff"></div>
<div style="left:282px;top:512px;width:11px;height:1px;background:#808080"></div>
<span class="t" style="left:296.00px;top:498px;color:#000;transform:scaleX(0.8900);">USDJPY</span>
<span class="t" style="left:351.00px;top:498px;color:#000;transform:scaleX(0.9911);">22.10.2007</span>
<span class="t" style="left:445.00px;top:498px;color:#000;transform:scaleX(0.9914);">00:00:00</span>
<span class="t" style="left:539.00px;top:498px;color:#000;transform:scaleX(0.9911);">26.10.2007</span>
<span class="t" style="left:633.00px;top:498px;color:#000;transform:scaleX(0.9914);">22:58:00</span>
<span class="t" style="left:764.46px;top:498px;color:#000;transform:scaleX(1.0057);">113,91000</span>
<span class="t" style="left:858.46px;top:498px;color:#000;transform:scaleX(1.0057);">114,20000</span>
<span class="t" style="left:985.81px;top:498px;color:#000;transform:scaleX(0.9900);">290</span>
<span class="t" style="left:1079.81px;top:498px;color:#000;transform:scaleX(0.9900);">290</span>
<div style="left:282px;top:513px;width:11px;height:16px;background:#D4D0C8"></div>
<div style="left:282px;top:513px;width:11px;height:1px;background:#fff"></div>
<div style="left:282px;top:513px;width:1px;height:16px;background:#fff"></div>
<div style="left:282px;top:529px;width:11px;height:1px;background:#808080"></div>
<span class="t" style="left:296.00px;top:515px;color:#000;transform:scaleX(0.8900);">EURCAD</span>
<span class="t" style="left:351.00px;top:515px;color:#000;transform:scaleX(0.9911);">22.10.2007</span>
<span class="t" style="left:445.00px;top:515px;color:#000;transform:scaleX(0.9914);">00:00:00</span>
<span class="t" style="left:539.00px;top:515px;color:#000;transform:scaleX(0.9911);">26.10.2007</span>
<span class="t" style="left:633.00px;top:515px;color:#000;transform:scaleX(0.9914);">22:58:00</span>
<span class="t" style="left:776.59px;top:515px;color:#000;transform:scaleX(0.9900);">1,38470</span>
<span class="t" style="left:870.59px;top:515px;color:#000;transform:scaleX(0.9900);">1,38450</span>
<span class="t" style="left:988.25px;top:515px;color:#000;transform:scaleX(0.9900);">-20</span>
<span class="t" style="left:1085.87px;top:515px;color:#000;transform:scaleX(0.9900);">20</span>
<div style="left:282px;top:530px;width:11px;height:16px;background:#D4D0C8"></div>
<div style="left:282px;top:530px;width:11px;height:1px;background:#fff"></div>
<div style="left:282px;top:530px;width:1px;height:16px;background:#fff"></div>
<div style="left:282px;top:546px;width:11px;height:1px;background:#808080"></div>
<span class="t" style="left:296.00px;top:532px;color:#000;transform:scaleX(0.8900);">CHFJPY</span>
<span class="t" style="left:351.00px;top:532px;color:#000;transform:scaleX(0.9911);">22.10.2007</span>
<span class="t" style="left:445.00px;top:532px;color:#000;transform:scaleX(0.9914);">00:00:00</span>
<span class="t" style="left:539.00px;top:532px;color:#000;transform:scaleX(0.9911);">26.10.2007</span>
<span class="t" style="left:633.00px;top:532px;color:#000;transform:scaleX(0.9914);">22:58:00</span>
<span class="t" style="left:770.52px;top:532px;color:#000;transform:scaleX(0.9900);">98,17000</span>
<span class="t" style="left:864.52px;top:532px;color:#000;transform:scaleX(0.9900);">98,09000</span>
<span class="t" style="left:988.25px;top:532px;color:#000;transform:scaleX(0.9900);">-80</span>
<span class="t" style="left:1085.87px;top:532px;color:#000;transform:scaleX(0.9900);">80</span>
<div style="left:282px;top:547px;width:11px;height:16px;background:#D4D0C8"></div>
<div style="left:282px;top:547px;width:11px;height:1px;background:#fff"></div>
<div style="left:282px;top:547px;width:1px;height:16px;background:#fff"></div>
<div style="left:282px;top:563px;width:11px;height:1px;background:#808080"></div>
<span class="t" style="left:296.00px;top:549px;color:#000;transform:scaleX(0.8900);">GBPUSD</span>
<span class="t" style="left:351.00px;top:549px;color:#000;transform:scaleX(0.9911);">22.10.2007</span>
<span class="t" style="left:445.00px;top:549px;color:#000;transform:scaleX(0.9914);">00:01:00</span>
<span class="t" style="left:539.00px;top:549px;color:#000;transform:scaleX(0.9911);">26.10.2007</span>
<span class="t" style="left:633.00px;top:549px;color:#000;transform:scaleX(0.9914);">22:58:00</span>
<span class="t" style="left:776.59px;top:549px;color:#000;transform:scaleX(0.9900);">2,05360</span>
<span class="t" style="left:870.59px;top:549px;color:#000;transform:scaleX(0.9900);">2,05240</span>
<span class="t" style="left:982.19px;top:549px;color:#000;transform:scaleX(0.9900);">-120</span>
<span class="t" style="left:1079.81px;top:549px;color:#000;transform:scaleX(0.9900);">120</span>
<div style="left:282px;top:564px;width:11px;height:16px;background:#D4D0C8"></div>
<div style="left:282px;top:564px;width:11px;height:1px;background:#fff"></div>
<div style="left:282px;top:564px;width:1px;height:16px;background:#fff"></div>
<div style="left:282px;top:580px;width:11px;height:1px;background:#808080"></div>
<span class="t" style="left:296.00px;top:566px;color:#000;transform:scaleX(0.8900);">USDCAD</span>
<span class="t" style="left:351.00px;top:566px;color:#000;transform:scaleX(0.9911);">22.10.2007</span>
<span class="t" style="left:445.00px;top:566px;color:#000;transform:scaleX(0.9914);">00:00:00</span>
<span class="t" style="left:539.00px;top:566px;color:#000;transform:scaleX(0.9911);">26.10.2007</span>
<span class="t" style="left:633.00px;top:566px;color:#000;transform:scaleX(0.9914);">22:58:00</span>
<span class="t" style="left:776.59px;top:566px;color:#000;transform:scaleX(0.9900);">0,96630</span>
<span class="t" style="left:870.59px;top:566px;color:#000;transform:scaleX(0.9900);">0,96210</span>
<span class="t" style="left:982.19px;top:566px;color:#000;transform:scaleX(0.9900);">-420</span>
<span class="t" style="left:1079.81px;top:566px;color:#000;transform:scaleX(0.9900);">420</span>
<div style="left:282px;top:581px;width:11px;height:16px;background:#D4D0C8"></div>
<div style="left:282px;top:581px;width:11px;height:1px;background:#fff"></div>
<div style="left:282px;top:581px;width:1px;height:16px;background:#fff"></div>
<div style="left:282px;top:597px;width:11px;height:1px;background:#808080"></div>
<span class="t" style="left:296.00px;top:583px;color:#000;transform:scaleX(0.8900);">GBPCAD</span>
<span class="t" style="left:351.00px;top:583px;color:#000;transform:scaleX(0.9911);">22.10.2007</span>
<span class="t" style="left:445.00px;top:583px;color:#000;transform:scaleX(0.9914);">00:00:00</span>
<span class="t" style="left:539.00px;top:583px;color:#000;transform:scaleX(0.9911);">26.10.2007</span>
<span class="t" style="left:633.00px;top:583px;color:#000;transform:scaleX(0.9914);">22:58:00</span>
<span class="t" style="left:776.59px;top:583px;color:#000;transform:scaleX(0.9900);">1,98420</span>
<span class="t" style="left:870.59px;top:583px;color:#000;transform:scaleX(0.9900);">1,97460</span>
<span class="t" style="left:982.19px;top:583px;color:#000;transform:scaleX(0.9900);">-960</span>
<span class="t" style="left:1079.81px;top:583px;color:#000;transform:scaleX(0.9900);">960</span>
<div style="left:282px;top:598px;width:11px;height:16px;background:#D4D0C8"></div>
<div style="left:282px;top:598px;width:11px;height:1px;background:#fff"></div>
<div style="left:282px;top:598px;width:1px;height:16px;background:#fff"></div>
<div style="left:282px;top:614px;width:11px;height:1px;background:#808080"></div>
<span class="t" style="left:296.00px;top:600px;color:#000;transform:scaleX(0.8900);">EURNZD</span>
<span class="t" style="left:351.00px;top:600px;color:#000;transform:scaleX(0.9911);">22.10.2007</span>
<span class="t" style="left:445.00px;top:600px;color:#000;transform:scaleX(0.9914);">00:00:00</span>
<span class="t" style="left:539.00px;top:600px;color:#000;transform:scaleX(0.9911);">26.10.2007</span>
<span class="t" style="left:633.00px;top:600px;color:#000;transform:scaleX(0.9914);">22:58:00</span>
<span class="t" style="left:776.59px;top:600px;color:#000;transform:scaleX(0.9900);">1,92230</span>
<span class="t" style="left:870.59px;top:600px;color:#000;transform:scaleX(0.9900);">1,87800</span>
<span class="t" style="left:973.09px;top:600px;color:#000;transform:scaleX(0.9900);">-4 430</span>
<span class="t" style="left:1070.71px;top:600px;color:#000;transform:scaleX(0.9900);">4 430</span>
<div style="left:282px;top:615px;width:11px;height:16px;background:#D4D0C8"></div>
<div style="left:282px;top:615px;width:11px;height:1px;background:#fff"></div>
<div style="left:282px;top:615px;width:1px;height:16px;background:#fff"></div>
<div style="left:282px;top:631px;width:11px;height:1px;background:#808080"></div>
<span class="t" style="left:296.00px;top:617px;color:#000;transform:scaleX(0.8900);">EURAUD</span>
<span class="t" style="left:351.00px;top:617px;color:#000;transform:scaleX(0.9911);">22.10.2007</span>
<span class="t" style="left:445.00px;top:617px;color:#000;transform:scaleX(0.9914);">00:00:00</span>
<span class="t" style="left:539.00px;top:617px;color:#000;transform:scaleX(0.9911);">26.10.2007</span>
<span class="t" style="left:633.00px;top:617px;color:#000;transform:scaleX(0.9914);">22:58:00</span>
<span class="t" style="left:776.59px;top:617px;color:#000;transform:scaleX(0.9900);">1,61250</span>
<span class="t" style="left:870.59px;top:617px;color:#000;transform:scaleX(0.9900);">1,56670</span>
<span class="t" style="left:973.09px;top:617px;color:#000;transform:scaleX(0.9900);">-4 580</span>
<span class="t" style="left:1070.71px;top:617px;color:#000;transform:scaleX(0.9900);">4 580</span>
<div style="left:282px;top:632px;width:11px;height:16px;background:#D4D0C8"></div>
<div style="left:282px;top:632px;width:11px;height:1px;background:#fff"></div>
<div style="left:282px;top:632px;width:1px;height:16px;background:#fff"></div>
<div style="left:282px;top:648px;width:11px;height:1px;background:#808080"></div>
<span class="t" style="left:296.00px;top:634px;color:#000;transform:scaleX(0.9058);">GBPAUD</span>
<span class="t" style="left:351.00px;top:634px;color:#000;transform:scaleX(0.9911);">22.10.2007</span>
<span class="t" style="left:445.00px;top:634px;color:#000;transform:scaleX(0.9914);">00:00:00</span>
<span class="t" style="left:539.00px;top:634px;color:#000;transform:scaleX(0.9911);">26.10.2007</span>
<span class="t" style="left:633.00px;top:634px;color:#000;transform:scaleX(0.9914);">22:58:00</span>
<span class="t" style="left:776.59px;top:634px;color:#000;transform:scaleX(0.9900);">2,31040</span>
<span class="t" style="left:870.59px;top:634px;color:#000;transform:scaleX(0.9900);">2,23450</span>
<span class="t" style="left:973.09px;top:634px;color:#000;transform:scaleX(0.9900);">-7 590</span>
<span class="t" style="left:1070.71px;top:634px;color:#000;transform:scaleX(0.9900);">7 590</span>
<div style="left:293px;top:206px;width:807px;height:1px;background:#D4D0C8"></div>
<div style="left:293px;top:223px;width:807px;height:1px;background:#D4D0C8"></div>
<div style="left:293px;top:240px;width:807px;height:1px;background:#D4D0C8"></div>
<div style="left:293px;top:257px;width:807px;height:1px;background:#D4D0C8"></div>
<div style="left:293px;top:274px;width:807px;height:1px;background:#D4D0C8"></div>
<div style="left:293px;top:291px;width:807px;height:1px;background:#D4D0C8"></div>
<div style="left:293px;top:308px;width:807px;height:1px;background:#D4D0C8"></div>
<div style="left:293px;top:325px;width:807px;height:1px;background:#D4D0C8"></div>
<div style="left:293px;top:342px;width:807px;height:1px;background:#D4D0C8"></div>
<div style="left:293px;top:359px;width:807px;height:1px;background:#D4D0C8"></div>
<div style="left:293px;top:376px;width:807px;height:1px;background:#D4D0C8"></div>
<div style="left:293px;top:393px;width:807px;height:1px;background:#D4D0C8"></div>
<div style="left:293px;top:410px;width:807px;height:1px;background:#D4D0C8"></div>
<div style="left:293px;top:427px;width:807px;height:1px;background:#D4D0C8"></div>
<div style="left:293px;top:444px;width:807px;height:1px;background:#D4D0C8"></div>
<div style="left:293px;top:461px;width:807px;height:1px;background:#D4D0C8"></div>
<div style="left:293px;top:478px;width:807px;height:1px;background:#D4D0C8"></div>
<div style="left:293px;top:495px;width:807px;height:1px;background:#D4D0C8"></div>
<div style="left:293px;top:512px;width:807px;height:1px;background:#D4D0C8"></div>
<div style="left:293px;top:529px;width:807px;height:1px;background:#D4D0C8"></div>
<div style="left:293px;top:546px;width:807px;height:1px;background:#D4D0C8"></div>
<div style="left:293px;top:563px;width:807px;height:1px;background:#D4D0C8"></div>
<div style="left:293px;top:580px;width:807px;height:1px;background:#D4D0C8"></div>
<div style="left:293px;top:597px;width:807px;height:1px;background:#D4D0C8"></div>
<div style="left:293px;top:614px;width:807px;height:1px;background:#D4D0C8"></div>
<div style="left:293px;top:631px;width:807px;height:1px;background:#D4D0C8"></div>
<div style="left:293px;top:648px;width:807px;height:1px;background:#D4D0C8"></div>
<div style="left:348px;top:190px;width:1px;height:459px;background:#D4D0C8"></div>
<div style="left:442px;top:190px;width:1px;height:459px;background:#D4D0C8"></div>
<div style="left:536px;top:190px;width:1px;height:459px;background:#D4D0C8"></div>
<div style="left:630px;top:190px;width:1px;height:459px;background:#D4D0C8"></div>
<div style="left:724px;top:190px;width:1px;height:459px;background:#D4D0C8"></div>
<div style="left:818px;top:190px;width:1px;height:459px;background:#D4D0C8"></div>
<div style="left:912px;top:190px;width:1px;height:459px;background:#D4D0C8"></div>
<div style="left:1006px;top:190px;width:1px;height:459px;background:#D4D0C8"></div>
<div style="left:1100px;top:190px;width:1px;height:459px;background:#D4D0C8"></div>
<div style="left:293px;top:190px;width:1px;height:459px;background:#808080"></div>
<div style="left:1263px;top:172px;width:16px;height:524px;background:repeating-conic-gradient(#fff 0 25%,#D4D0C8 0 50%) 0 0/2px 2px"></div>
<div style="left:1263px;top:172px;width:16px;height:16px;background:#D4D0C8;border-top:1px solid #D4D0C8;border-left:1px solid #D4D0C8;border-right:1px solid #404040;border-bottom:1px solid #404040;box-sizing:border-box"></div>
<div style="left:1264px;top:173px;width:14px;height:1px;background:#fff"></div>
<div style="left:1264px;top:173px;width:1px;height:14px;background:#fff"></div>
<div style="left:1264px;top:186px;width:14px;height:1px;background:#808080"></div>
<div style="left:1277px;top:173px;width:1px;height:14px;background:#808080"></div>
<svg style="left:1267px;top:178px" width="7" height="4" viewBox="0 0 7 4"><path d="M0 4H7L3.5 0Z" fill="#000"/></svg>
<div style="left:1263px;top:304px;width:16px;height:259px;background:#D4D0C8;border-top:1px solid #D4D0C8;border-left:1px solid #D4D0C8;border-right:1px solid #404040;border-bottom:1px solid #404040;box-sizing:border-box"></div>
<div style="left:1264px;top:305px;width:14px;height:1px;background:#fff"></div>
<div style="left:1264px;top:305px;width:1px;height:257px;background:#fff"></div>
<div style="left:1264px;top:561px;width:14px;height:1px;background:#808080"></div>
<div style="left:1277px;top:305px;width:1px;height:257px;background:#808080"></div>
<div style="left:1263px;top:679px;width:16px;height:16px;background:#D4D0C8;border-top:1px solid #D4D0C8;border-left:1px solid #D4D0C8;border-right:1px solid #404040;border-bottom:1px solid #404040;box-sizing:border-box"></div>
<div style="left:1264px;top:680px;width:14px;height:1px;background:#fff"></div>
<div style="left:1264px;top:680px;width:1px;height:14px;background:#fff"></div>
<div style="left:1264px;top:693px;width:14px;height:1px;background:#808080"></div>
<div style="left:1277px;top:680px;width:1px;height:14px;background:#808080"></div>
<svg style="left:1267px;top:685px" width="7" height="4" viewBox="0 0 7 4"><path d="M0 0H7L3.5 4Z" fill="#000"/></svg>
<div style="left:283px;top:704px;width:56px;height:20px;background:repeating-conic-gradient(#fff 0 25%,#D4D0C8 0 50%) 0 0/2px 2px;border:1px solid #fff;border-top-color:#404040;border-left-color:#404040;box-sizing:border-box"></div>
<div style="left:284px;top:705px;width:54px;height:1px;background:#808080"></div>
<div style="left:284px;top:705px;width:1px;height:18px;background:#808080"></div>
<span class="t" style="left:290.00px;top:708px;color:#000;transform:scaleX(0.9963);"><u>1</u>. Сетка</span>
<div style="left:343px;top:703px;width:1px;height:21px;background:#808080"></div>
<div style="left:344px;top:703px;width:1px;height:21px;background:#fff"></div>
<span class="t" style="left:354.50px;top:707px;color:#000;transform:scaleX(0.9775);"><u>2</u>. Форма</span>
<div style="left:410px;top:703px;width:1px;height:21px;background:#808080"></div>
<div style="left:411px;top:703px;width:1px;height:21px;background:#fff"></div>
<span class="t" style="left:422.00px;top:707px;color:#000;transform:scaleX(1.0349);"><u>3</u>. Печать</span>
<div style="left:482px;top:703px;width:1px;height:21px;background:#808080"></div>
<div style="left:483px;top:703px;width:1px;height:21px;background:#fff"></div>
<div style="left:0px;top:730px;width:1276px;height:20px;background:#DCD9D2;border-radius:2px"></div>
<svg style="left:3px;top:734px" width="3" height="13" viewBox="0 0 3 13"><rect x="0" y="0" width="3" height="1" fill="#808080"/><rect x="0" y="2" width="3" height="1" fill="#808080"/><rect x="0" y="4" width="3" height="1" fill="#808080"/><rect x="0" y="6" width="3" height="1" fill="#808080"/><rect x="0" y="8" width="3" height="1" fill="#808080"/><rect x="0" y="10" width="3" height="1" fill="#808080"/><rect x="0" y="12" width="3" height="1" fill="#808080"/></svg>
<div style="left:9px;top:731px;width:126px;height:18px;background:#D6D8E0;border:1px solid #0A246A;box-sizing:border-box"></div>
<svg style="left:14px;top:732px" width="16" height="16" viewBox="0 0 16 16"><g transform="translate(0,0)"><polygon points="15.30,5.00 15.18,6.07 13.53,6.46 13.13,7.09 13.49,8.75 12.58,9.32 11.25,8.28 10.50,8.36 9.43,9.68 8.42,9.32 8.41,7.63 7.87,7.09 6.18,7.08 5.82,6.07 7.14,5.00 7.22,4.25 6.18,2.92 6.75,2.01 8.41,2.37 9.04,1.97 9.43,0.32 10.50,0.20 11.25,1.72 11.96,1.97 13.49,1.25 14.25,2.01 13.53,3.54 13.78,4.25" fill="#30A8F0" stroke="#1060A8" stroke-width=".7"/><circle cx="10.5" cy="5" r="1.54" fill="#fff" stroke="#1060A8" stroke-width=".5"/><polygon points="10.50,11.00 10.37,12.11 8.65,12.52 8.24,13.18 8.62,14.91 7.67,15.50 6.28,14.41 5.50,14.50 4.39,15.87 3.33,15.50 3.32,13.74 2.76,13.18 1.00,13.17 0.63,12.11 2.00,11.00 2.09,10.22 1.00,8.83 1.59,7.88 3.32,8.26 3.98,7.85 4.39,6.13 5.50,6.00 6.28,7.59 7.02,7.85 8.62,7.09 9.41,7.88 8.65,9.48 8.91,10.22" fill="#58D028" stroke="#2A8A18" stroke-width=".7"/><circle cx="5.5" cy="11" r="1.60" fill="#fff" stroke="#2A8A18" stroke-width=".5"/></g></svg>
<span class="t" style="left:33.00px;top:734px;color:#000;transform:scaleX(0.8737);">SVOD_PROCEDURE</span>
<div style="left:137px;top:733px;width:1px;height:15px;background:#A0A0A0"></div>
<svg style="left:145px;top:732px" width="16" height="16" viewBox="0 0 16 16"><g transform="translate(0,0)"><polygon points="15.30,5.00 15.18,6.07 13.53,6.46 13.13,7.09 13.49,8.75 12.58,9.32 11.25,8.28 10.50,8.36 9.43,9.68 8.42,9.32 8.41,7.63 7.87,7.09 6.18,7.08 5.82,6.07 7.14,5.00 7.22,4.25 6.18,2.92 6.75,2.01 8.41,2.37 9.04,1.97 9.43,0.32 10.50,0.20 11.25,1.72 11.96,1.97 13.49,1.25 14.25,2.01 13.53,3.54 13.78,4.25" fill="#30A8F0" stroke="#1060A8" stroke-width=".7"/><circle cx="10.5" cy="5" r="1.54" fill="#fff" stroke="#1060A8" stroke-width=".5"/><polygon points="10.50,11.00 10.37,12.11 8.65,12.52 8.24,13.18 8.62,14.91 7.67,15.50 6.28,14.41 5.50,14.50 4.39,15.87 3.33,15.50 3.32,13.74 2.76,13.18 1.00,13.17 0.63,12.11 2.00,11.00 2.09,10.22 1.00,8.83 1.59,7.88 3.32,8.26 3.98,7.85 4.39,6.13 5.50,6.00 6.28,7.59 7.02,7.85 8.62,7.09 9.41,7.88 8.65,9.48 8.91,10.22" fill="#58D028" stroke="#2A8A18" stroke-width=".7"/><circle cx="5.5" cy="11" r="1.60" fill="#fff" stroke="#2A8A18" stroke-width=".5"/></g></svg>
<span class="t" style="left:164.00px;top:734px;color:#000;transform:scaleX(0.8873);">AUDCAD_PROCEDURE</span>
<div style="left:0px;top:753px;width:64px;height:17px;border-top:1px solid #808080;border-left:1px solid #808080;border-bottom:1px solid #fff;border-right:1px solid #fff;box-sizing:border-box"></div>
<div style="left:67px;top:753px;width:73px;height:17px;border-top:1px solid #808080;border-left:1px solid #808080;border-bottom:1px solid #fff;border-right:1px solid #fff;box-sizing:border-box"></div>
<div style="left:141px;top:753px;width:229px;height:17px;border-top:1px solid #808080;border-left:1px solid #808080;border-bottom:1px solid #fff;border-right:1px solid #fff;box-sizing:border-box"></div>
<div style="left:372px;top:753px;width:233px;height:17px;border-top:1px solid #808080;border-left:1px solid #808080;border-bottom:1px solid #fff;border-right:1px solid #fff;box-sizing:border-box"></div>
<div style="left:606px;top:753px;width:673px;height:17px;border-top:1px solid #808080;border-left:1px solid #808080;border-bottom:1px solid #fff;border-right:1px solid #fff;box-sizing:border-box"></div>
<span class="t" style="left:35.00px;top:756px;color:#000;transform:scaleX(1.0231);">1:</span>
<span class="t" style="left:57.40px;top:756px;color:#000;transform:scaleX(0.8163);">1</span>
<span class="t" style="left:143.70px;top:756px;color:#000;transform:scaleX(0.9871);">C:\DataBase\Pairs.fdb (Dialect 3)</span>
<span class="t" style="left:376.00px;top:756px;color:#000;transform:scaleX(0.9731);">Осталось 244 изменений таблицы [AUDCAD]</span>
<div style="left:0px;top:771px;width:1280px;height:1px;background:#fff"></div>
</body></html>
